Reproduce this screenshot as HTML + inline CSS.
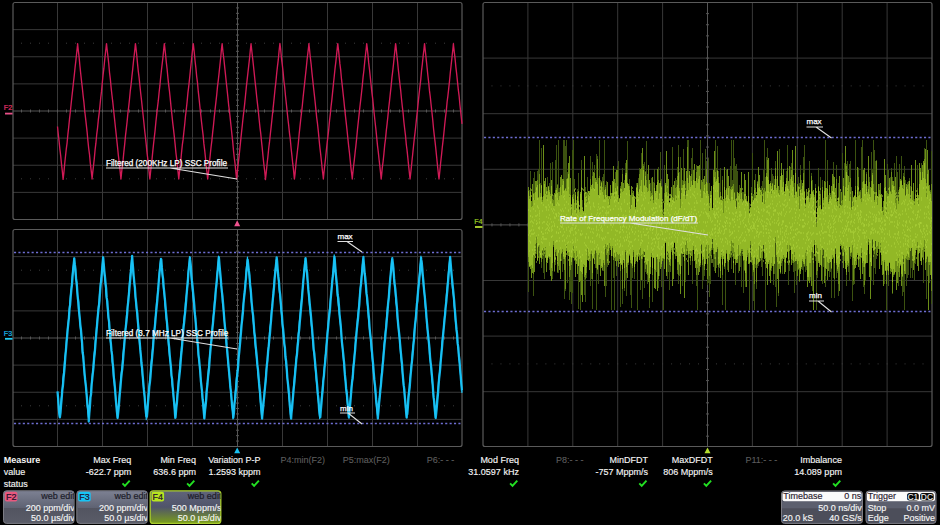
<!DOCTYPE html><html><head><meta charset="utf-8"><style>html,body{margin:0;padding:0;background:#000;overflow:hidden}svg{display:block}text{font-family:"Liberation Sans",sans-serif}</style></head><body>
<svg width="940" height="525" viewBox="0 0 940 525">
<rect width="940" height="525" fill="#000"/>
<path d="M57.50 2.5V219.5M102.50 2.5V219.5M147.50 2.5V219.5M192.50 2.5V219.5M282.50 2.5V219.5M327.50 2.5V219.5M372.50 2.5V219.5M417.50 2.5V219.5M13 29.62H462M13 56.75H462M13 83.88H462M13 138.12H462M13 165.25H462M13 192.38H462" stroke="#383838" stroke-width="1" fill="none"/>
<path d="M21.00 43.19h1M30.00 43.19h1M39.00 43.19h1M48.00 43.19h1M57.00 43.19h1M66.00 43.19h1M75.00 43.19h1M84.00 43.19h1M93.00 43.19h1M102.00 43.19h1M111.00 43.19h1M120.00 43.19h1M129.00 43.19h1M138.00 43.19h1M147.00 43.19h1M156.00 43.19h1M165.00 43.19h1M174.00 43.19h1M183.00 43.19h1M192.00 43.19h1M201.00 43.19h1M210.00 43.19h1M219.00 43.19h1M228.00 43.19h1M237.00 43.19h1M246.00 43.19h1M255.00 43.19h1M264.00 43.19h1M273.00 43.19h1M282.00 43.19h1M291.00 43.19h1M300.00 43.19h1M309.00 43.19h1M318.00 43.19h1M327.00 43.19h1M336.00 43.19h1M345.00 43.19h1M354.00 43.19h1M363.00 43.19h1M372.00 43.19h1M381.00 43.19h1M390.00 43.19h1M399.00 43.19h1M408.00 43.19h1M417.00 43.19h1M426.00 43.19h1M435.00 43.19h1M444.00 43.19h1M453.00 43.19h1M21.00 178.81h1M30.00 178.81h1M39.00 178.81h1M48.00 178.81h1M57.00 178.81h1M66.00 178.81h1M75.00 178.81h1M84.00 178.81h1M93.00 178.81h1M102.00 178.81h1M111.00 178.81h1M120.00 178.81h1M129.00 178.81h1M138.00 178.81h1M147.00 178.81h1M156.00 178.81h1M165.00 178.81h1M174.00 178.81h1M183.00 178.81h1M192.00 178.81h1M201.00 178.81h1M210.00 178.81h1M219.00 178.81h1M228.00 178.81h1M237.00 178.81h1M246.00 178.81h1M255.00 178.81h1M264.00 178.81h1M273.00 178.81h1M282.00 178.81h1M291.00 178.81h1M300.00 178.81h1M309.00 178.81h1M318.00 178.81h1M327.00 178.81h1M336.00 178.81h1M345.00 178.81h1M354.00 178.81h1M363.00 178.81h1M372.00 178.81h1M381.00 178.81h1M390.00 178.81h1M399.00 178.81h1M408.00 178.81h1M417.00 178.81h1M426.00 178.81h1M435.00 178.81h1M444.00 178.81h1M453.00 178.81h1" stroke="#3c3c3c" stroke-width="1" fill="none"/>
<path d="M237.50 2.5V219.5M13 111.00H462M21.50 109.50v3M30.50 109.50v3M39.50 109.50v3M48.50 109.50v3M57.50 109.50v3M66.50 109.50v3M75.50 109.50v3M84.50 109.50v3M93.50 109.50v3M102.50 109.50v3M111.50 109.50v3M120.50 109.50v3M129.50 109.50v3M138.50 109.50v3M147.50 109.50v3M156.50 109.50v3M165.50 109.50v3M174.50 109.50v3M183.50 109.50v3M192.50 109.50v3M201.50 109.50v3M210.50 109.50v3M219.50 109.50v3M228.50 109.50v3M237.50 109.50v3M246.50 109.50v3M255.50 109.50v3M264.50 109.50v3M273.50 109.50v3M282.50 109.50v3M291.50 109.50v3M300.50 109.50v3M309.50 109.50v3M318.50 109.50v3M327.50 109.50v3M336.50 109.50v3M345.50 109.50v3M354.50 109.50v3M363.50 109.50v3M372.50 109.50v3M381.50 109.50v3M390.50 109.50v3M399.50 109.50v3M408.50 109.50v3M417.50 109.50v3M426.50 109.50v3M435.50 109.50v3M444.50 109.50v3M453.50 109.50v3M236.00 7.92h3M236.00 13.35h3M236.00 18.77h3M236.00 24.20h3M236.00 29.62h3M236.00 35.05h3M236.00 40.48h3M236.00 45.90h3M236.00 51.33h3M236.00 56.75h3M236.00 62.17h3M236.00 67.60h3M236.00 73.03h3M236.00 78.45h3M236.00 83.88h3M236.00 89.30h3M236.00 94.72h3M236.00 100.15h3M236.00 105.58h3M236.00 111.00h3M236.00 116.42h3M236.00 121.85h3M236.00 127.28h3M236.00 132.70h3M236.00 138.12h3M236.00 143.55h3M236.00 148.97h3M236.00 154.40h3M236.00 159.82h3M236.00 165.25h3M236.00 170.68h3M236.00 176.10h3M236.00 181.53h3M236.00 186.95h3M236.00 192.38h3M236.00 197.80h3M236.00 203.22h3M236.00 208.65h3M236.00 214.07h3" stroke="#555" stroke-width="1" fill="none"/>
<rect x="13" y="2.5" width="449" height="217.0" rx="2" fill="none" stroke="#5a5a5a" stroke-width="1.2"/>
<path d="M57.50 229.5V446.5M102.50 229.5V446.5M147.50 229.5V446.5M192.50 229.5V446.5M282.50 229.5V446.5M327.50 229.5V446.5M372.50 229.5V446.5M417.50 229.5V446.5M13 256.62H462M13 283.75H462M13 310.88H462M13 365.12H462M13 392.25H462M13 419.38H462" stroke="#383838" stroke-width="1" fill="none"/>
<path d="M21.00 270.19h1M30.00 270.19h1M39.00 270.19h1M48.00 270.19h1M57.00 270.19h1M66.00 270.19h1M75.00 270.19h1M84.00 270.19h1M93.00 270.19h1M102.00 270.19h1M111.00 270.19h1M120.00 270.19h1M129.00 270.19h1M138.00 270.19h1M147.00 270.19h1M156.00 270.19h1M165.00 270.19h1M174.00 270.19h1M183.00 270.19h1M192.00 270.19h1M201.00 270.19h1M210.00 270.19h1M219.00 270.19h1M228.00 270.19h1M237.00 270.19h1M246.00 270.19h1M255.00 270.19h1M264.00 270.19h1M273.00 270.19h1M282.00 270.19h1M291.00 270.19h1M300.00 270.19h1M309.00 270.19h1M318.00 270.19h1M327.00 270.19h1M336.00 270.19h1M345.00 270.19h1M354.00 270.19h1M363.00 270.19h1M372.00 270.19h1M381.00 270.19h1M390.00 270.19h1M399.00 270.19h1M408.00 270.19h1M417.00 270.19h1M426.00 270.19h1M435.00 270.19h1M444.00 270.19h1M453.00 270.19h1M21.00 405.81h1M30.00 405.81h1M39.00 405.81h1M48.00 405.81h1M57.00 405.81h1M66.00 405.81h1M75.00 405.81h1M84.00 405.81h1M93.00 405.81h1M102.00 405.81h1M111.00 405.81h1M120.00 405.81h1M129.00 405.81h1M138.00 405.81h1M147.00 405.81h1M156.00 405.81h1M165.00 405.81h1M174.00 405.81h1M183.00 405.81h1M192.00 405.81h1M201.00 405.81h1M210.00 405.81h1M219.00 405.81h1M228.00 405.81h1M237.00 405.81h1M246.00 405.81h1M255.00 405.81h1M264.00 405.81h1M273.00 405.81h1M282.00 405.81h1M291.00 405.81h1M300.00 405.81h1M309.00 405.81h1M318.00 405.81h1M327.00 405.81h1M336.00 405.81h1M345.00 405.81h1M354.00 405.81h1M363.00 405.81h1M372.00 405.81h1M381.00 405.81h1M390.00 405.81h1M399.00 405.81h1M408.00 405.81h1M417.00 405.81h1M426.00 405.81h1M435.00 405.81h1M444.00 405.81h1M453.00 405.81h1" stroke="#3c3c3c" stroke-width="1" fill="none"/>
<path d="M237.50 229.5V446.5M13 338.00H462M21.50 336.50v3M30.50 336.50v3M39.50 336.50v3M48.50 336.50v3M57.50 336.50v3M66.50 336.50v3M75.50 336.50v3M84.50 336.50v3M93.50 336.50v3M102.50 336.50v3M111.50 336.50v3M120.50 336.50v3M129.50 336.50v3M138.50 336.50v3M147.50 336.50v3M156.50 336.50v3M165.50 336.50v3M174.50 336.50v3M183.50 336.50v3M192.50 336.50v3M201.50 336.50v3M210.50 336.50v3M219.50 336.50v3M228.50 336.50v3M237.50 336.50v3M246.50 336.50v3M255.50 336.50v3M264.50 336.50v3M273.50 336.50v3M282.50 336.50v3M291.50 336.50v3M300.50 336.50v3M309.50 336.50v3M318.50 336.50v3M327.50 336.50v3M336.50 336.50v3M345.50 336.50v3M354.50 336.50v3M363.50 336.50v3M372.50 336.50v3M381.50 336.50v3M390.50 336.50v3M399.50 336.50v3M408.50 336.50v3M417.50 336.50v3M426.50 336.50v3M435.50 336.50v3M444.50 336.50v3M453.50 336.50v3M236.00 234.93h3M236.00 240.35h3M236.00 245.78h3M236.00 251.20h3M236.00 256.62h3M236.00 262.05h3M236.00 267.48h3M236.00 272.90h3M236.00 278.32h3M236.00 283.75h3M236.00 289.18h3M236.00 294.60h3M236.00 300.02h3M236.00 305.45h3M236.00 310.88h3M236.00 316.30h3M236.00 321.73h3M236.00 327.15h3M236.00 332.57h3M236.00 338.00h3M236.00 343.43h3M236.00 348.85h3M236.00 354.27h3M236.00 359.70h3M236.00 365.12h3M236.00 370.55h3M236.00 375.98h3M236.00 381.40h3M236.00 386.82h3M236.00 392.25h3M236.00 397.68h3M236.00 403.10h3M236.00 408.52h3M236.00 413.95h3M236.00 419.38h3M236.00 424.80h3M236.00 430.23h3M236.00 435.65h3M236.00 441.07h3" stroke="#555" stroke-width="1" fill="none"/>
<rect x="13" y="229.5" width="449" height="217.0" rx="2" fill="none" stroke="#5a5a5a" stroke-width="1.2"/>
<path d="M527.90 2.5V446.5M572.80 2.5V446.5M617.70 2.5V446.5M662.60 2.5V446.5M752.40 2.5V446.5M797.30 2.5V446.5M842.20 2.5V446.5M887.10 2.5V446.5M483 58.10H932M483 113.70H932M483 169.30H932M483 280.50H932M483 336.10H932M483 391.70H932" stroke="#383838" stroke-width="1" fill="none"/>
<path d="M491.48 85.90h1M500.46 85.90h1M509.44 85.90h1M518.42 85.90h1M527.40 85.90h1M536.38 85.90h1M545.36 85.90h1M554.34 85.90h1M563.32 85.90h1M572.30 85.90h1M581.28 85.90h1M590.26 85.90h1M599.24 85.90h1M608.22 85.90h1M617.20 85.90h1M626.18 85.90h1M635.16 85.90h1M644.14 85.90h1M653.12 85.90h1M662.10 85.90h1M671.08 85.90h1M680.06 85.90h1M689.04 85.90h1M698.02 85.90h1M707.00 85.90h1M715.98 85.90h1M724.96 85.90h1M733.94 85.90h1M742.92 85.90h1M751.90 85.90h1M760.88 85.90h1M769.86 85.90h1M778.84 85.90h1M787.82 85.90h1M796.80 85.90h1M805.78 85.90h1M814.76 85.90h1M823.74 85.90h1M832.72 85.90h1M841.70 85.90h1M850.68 85.90h1M859.66 85.90h1M868.64 85.90h1M877.62 85.90h1M886.60 85.90h1M895.58 85.90h1M904.56 85.90h1M913.54 85.90h1M922.52 85.90h1M491.48 363.90h1M500.46 363.90h1M509.44 363.90h1M518.42 363.90h1M527.40 363.90h1M536.38 363.90h1M545.36 363.90h1M554.34 363.90h1M563.32 363.90h1M572.30 363.90h1M581.28 363.90h1M590.26 363.90h1M599.24 363.90h1M608.22 363.90h1M617.20 363.90h1M626.18 363.90h1M635.16 363.90h1M644.14 363.90h1M653.12 363.90h1M662.10 363.90h1M671.08 363.90h1M680.06 363.90h1M689.04 363.90h1M698.02 363.90h1M707.00 363.90h1M715.98 363.90h1M724.96 363.90h1M733.94 363.90h1M742.92 363.90h1M751.90 363.90h1M760.88 363.90h1M769.86 363.90h1M778.84 363.90h1M787.82 363.90h1M796.80 363.90h1M805.78 363.90h1M814.76 363.90h1M823.74 363.90h1M832.72 363.90h1M841.70 363.90h1M850.68 363.90h1M859.66 363.90h1M868.64 363.90h1M877.62 363.90h1M886.60 363.90h1M895.58 363.90h1M904.56 363.90h1M913.54 363.90h1M922.52 363.90h1" stroke="#3c3c3c" stroke-width="1" fill="none"/>
<path d="M707.50 2.5V446.5M483 224.90H932M491.98 223.40v3M500.96 223.40v3M509.94 223.40v3M518.92 223.40v3M527.90 223.40v3M536.88 223.40v3M545.86 223.40v3M554.84 223.40v3M563.82 223.40v3M572.80 223.40v3M581.78 223.40v3M590.76 223.40v3M599.74 223.40v3M608.72 223.40v3M617.70 223.40v3M626.68 223.40v3M635.66 223.40v3M644.64 223.40v3M653.62 223.40v3M662.60 223.40v3M671.58 223.40v3M680.56 223.40v3M689.54 223.40v3M698.52 223.40v3M707.50 223.40v3M716.48 223.40v3M725.46 223.40v3M734.44 223.40v3M743.42 223.40v3M752.40 223.40v3M761.38 223.40v3M770.36 223.40v3M779.34 223.40v3M788.32 223.40v3M797.30 223.40v3M806.28 223.40v3M815.26 223.40v3M824.24 223.40v3M833.22 223.40v3M842.20 223.40v3M851.18 223.40v3M860.16 223.40v3M869.14 223.40v3M878.12 223.40v3M887.10 223.40v3M896.08 223.40v3M905.06 223.40v3M914.04 223.40v3M923.02 223.40v3M706.00 13.62h3M706.00 24.74h3M706.00 35.86h3M706.00 46.98h3M706.00 58.10h3M706.00 69.22h3M706.00 80.34h3M706.00 91.46h3M706.00 102.58h3M706.00 113.70h3M706.00 124.82h3M706.00 135.94h3M706.00 147.06h3M706.00 158.18h3M706.00 169.30h3M706.00 180.42h3M706.00 191.54h3M706.00 202.66h3M706.00 213.78h3M706.00 224.90h3M706.00 236.02h3M706.00 247.14h3M706.00 258.26h3M706.00 269.38h3M706.00 280.50h3M706.00 291.62h3M706.00 302.74h3M706.00 313.86h3M706.00 324.98h3M706.00 336.10h3M706.00 347.22h3M706.00 358.34h3M706.00 369.46h3M706.00 380.58h3M706.00 391.70h3M706.00 402.82h3M706.00 413.94h3M706.00 425.06h3M706.00 436.18h3" stroke="#555" stroke-width="1" fill="none"/>
<rect x="483" y="2.5" width="449" height="444.0" rx="2" fill="none" stroke="#5a5a5a" stroke-width="1.2"/>
<path d="M14 252.5H462" stroke="#6e6ed2" stroke-width="1.3" stroke-dasharray="2.1 2.3" fill="none"/>
<path d="M14 423.5H462" stroke="#6e6ed2" stroke-width="1.3" stroke-dasharray="2.1 2.3" fill="none"/>
<path d="M484 137.5H932" stroke="#6e6ed2" stroke-width="1.3" stroke-dasharray="2.1 2.3" fill="none"/>
<path d="M484 311.5H932" stroke="#6e6ed2" stroke-width="1.3" stroke-dasharray="2.1 2.3" fill="none"/>
<path d="M57.50 126.5 58.30 134.3 59.10 141.5 59.90 149.4 60.70 155.9 61.50 164.1 62.30 171.0 63.10 179.4 63.14 179.0 63.90 172.6 64.70 163.7 65.50 156.3 66.30 148.9 67.10 142.8 67.90 134.3 68.70 127.2 69.50 119.1 70.30 112.0 71.10 104.3 71.90 96.7 72.70 89.7 73.50 82.2 74.30 75.2 75.10 67.3 75.90 60.3 76.70 52.7 77.50 45.4 77.60 43.6 78.30 50.5 79.10 57.0 79.90 65.8 80.70 73.5 81.50 80.9 82.30 87.7 83.10 95.5 83.90 102.1 84.70 110.7 85.50 117.7 86.30 124.7 87.10 131.8 87.90 140.7 88.70 148.5 89.50 154.3 90.30 163.1 91.10 169.9 91.90 176.9 92.05 179.0 92.70 172.6 93.50 165.9 94.30 158.6 95.10 149.7 95.90 143.2 96.70 134.7 97.50 128.4 98.30 120.2 99.10 113.7 99.90 106.4 100.70 98.0 101.50 91.4 102.30 82.7 103.10 74.8 103.90 68.2 104.70 59.7 105.50 52.5 106.30 45.4 106.51 43.6 107.10 49.3 107.90 56.0 108.70 63.3 109.50 72.3 110.30 78.8 111.10 87.4 111.90 94.8 112.70 101.4 113.50 109.0 114.30 116.6 115.10 124.3 115.90 131.7 116.70 139.2 117.50 146.8 118.30 154.8 119.10 161.5 119.90 168.9 120.70 176.9 120.97 179.0 121.50 173.5 122.30 166.1 123.10 159.9 123.90 151.5 124.70 144.1 125.50 135.6 126.30 128.9 127.10 121.7 127.90 113.2 128.70 106.8 129.50 99.3 130.30 90.8 131.10 84.3 131.90 76.5 132.70 69.4 133.50 61.3 134.30 54.5 135.10 47.0 135.42 43.6 135.90 47.2 136.70 54.8 137.50 63.4 138.30 71.4 139.10 77.6 139.90 85.5 140.70 93.2 141.50 100.2 142.30 107.8 143.10 115.2 143.90 122.8 144.70 130.7 145.50 137.7 146.30 145.3 147.10 153.5 147.90 159.6 148.70 168.1 149.50 175.9 149.88 179.0 150.30 174.7 151.10 167.0 151.90 160.6 152.70 152.1 153.50 144.5 154.30 137.4 155.10 130.4 155.90 121.8 156.70 114.7 157.50 107.3 158.30 100.7 159.10 92.5 159.90 85.7 160.70 77.0 161.50 69.8 162.30 62.9 163.10 55.8 163.90 47.5 164.33 43.6 164.70 46.6 165.50 53.9 166.30 62.1 167.10 69.0 167.90 77.6 168.70 85.1 169.50 91.5 170.30 99.1 171.10 107.6 171.90 114.8 172.70 122.6 173.50 129.2 174.30 136.3 175.10 144.1 175.90 152.5 176.70 159.1 177.50 166.7 178.30 174.3 178.78 179.0 179.10 175.9 179.90 168.4 180.70 161.8 181.50 152.9 182.30 145.2 183.10 139.4 183.90 131.8 184.70 124.5 185.50 116.0 186.30 109.4 187.10 101.9 187.90 93.1 188.70 86.6 189.50 79.2 190.30 71.4 191.10 63.7 191.90 55.8 192.70 48.4 193.24 43.6 193.50 45.5 194.30 52.8 195.10 61.2 195.90 68.1 196.70 76.6 197.50 82.7 198.30 91.7 199.10 98.8 199.90 106.7 200.70 114.2 201.50 121.7 202.30 128.6 203.10 135.1 203.90 143.9 204.70 150.4 205.50 158.1 206.30 166.2 207.10 173.5 207.69 179.0 207.90 176.9 208.70 170.4 209.50 162.3 210.30 154.3 211.10 146.7 211.90 140.3 212.70 132.1 213.50 125.1 214.30 116.9 215.10 109.1 215.90 102.2 216.70 95.2 217.50 86.6 218.30 80.2 219.10 72.9 219.90 65.2 220.70 57.8 221.50 48.8 222.15 43.6 222.30 45.2 223.10 53.2 223.90 59.2 224.70 67.1 225.50 74.6 226.30 82.5 227.10 89.8 227.90 97.4 228.70 105.5 229.50 111.6 230.30 119.1 231.10 126.8 231.90 134.3 232.70 141.6 233.50 150.8 234.30 158.0 235.10 164.2 235.90 172.4 236.60 179.0 236.70 177.8 237.50 170.3 238.30 162.9 239.10 155.9 239.90 148.3 240.70 140.4 241.50 132.6 242.30 125.3 243.10 117.5 243.90 110.8 244.70 103.6 245.50 95.5 246.30 87.4 247.10 80.1 247.90 73.0 248.70 65.9 249.50 58.7 250.30 50.5 251.06 43.6 251.10 44.5 251.90 51.7 252.70 58.8 253.50 66.2 254.30 73.9 255.10 81.8 255.90 88.8 256.70 96.8 257.50 103.9 258.30 111.0 259.10 119.0 259.90 126.8 260.70 133.1 261.50 141.3 262.30 148.8 263.10 157.1 263.90 164.7 264.70 171.1 265.50 179.6 265.51 179.0 266.30 172.2 267.10 163.7 267.90 156.6 268.70 148.5 269.50 142.2 270.30 134.5 271.10 127.4 271.90 119.7 272.70 112.0 273.50 104.6 274.30 96.8 275.10 88.5 275.90 81.9 276.70 73.3 277.50 66.1 278.30 59.7 279.10 50.9 279.90 43.5 279.97 43.6 280.70 49.7 281.50 58.6 282.30 64.8 283.10 72.1 283.90 81.0 284.70 87.2 285.50 96.0 286.30 103.2 287.10 111.0 287.90 118.7 288.70 125.5 289.50 133.4 290.30 139.5 291.10 148.3 291.90 155.4 292.70 163.2 293.50 169.6 294.30 178.3 294.42 179.0 295.10 173.5 295.90 164.4 296.70 157.4 297.50 150.3 298.30 143.3 299.10 134.7 299.90 127.1 300.70 119.8 301.50 112.9 302.30 105.7 303.10 97.5 303.90 90.0 304.70 82.6 305.50 75.0 306.30 67.6 307.10 59.5 307.90 52.8 308.70 46.1 308.88 43.6 309.50 49.3 310.30 57.3 311.10 63.8 311.90 72.2 312.70 79.8 313.50 87.2 314.30 94.4 315.10 101.8 315.90 109.6 316.70 117.6 317.50 123.7 318.30 131.1 319.10 139.8 319.90 147.6 320.70 154.3 321.50 161.7 322.30 169.7 323.10 176.2 323.34 179.0 323.90 173.3 324.70 165.7 325.50 158.9 326.30 150.9 327.10 143.3 327.90 136.6 328.70 129.6 329.50 120.9 330.30 114.1 331.10 106.1 331.90 99.4 332.70 91.4 333.50 83.4 334.30 75.8 335.10 67.9 335.90 61.3 336.70 53.6 337.50 45.7 337.79 43.6 338.30 48.1 339.10 55.6 339.90 63.9 340.70 70.2 341.50 79.2 342.30 85.8 343.10 93.5 343.90 100.8 344.70 108.9 345.50 116.4 346.30 123.4 347.10 130.8 347.90 138.7 348.70 146.4 349.50 153.1 350.30 161.2 351.10 169.1 351.90 175.7 352.25 179.0 352.70 174.3 353.50 166.8 354.30 160.1 355.10 152.6 355.90 145.6 356.70 137.9 357.50 129.3 358.30 121.7 359.10 114.4 359.90 106.7 360.70 100.2 361.50 93.0 362.30 85.5 363.10 76.9 363.90 70.5 364.70 62.0 365.50 54.7 366.30 47.8 366.70 43.6 367.10 46.6 367.90 54.1 368.70 62.9 369.50 69.5 370.30 77.1 371.10 85.0 371.90 92.6 372.70 98.9 373.50 107.0 374.30 114.7 375.10 122.3 375.90 129.3 376.70 137.4 377.50 145.6 378.30 152.1 379.10 159.8 379.90 166.6 380.70 174.3 381.15 179.0 381.50 176.1 382.30 167.6 383.10 161.5 383.90 154.0 384.70 145.1 385.50 139.1 386.30 130.6 387.10 123.8 387.90 116.3 388.70 108.0 389.50 101.1 390.30 93.6 391.10 86.4 391.90 77.9 392.70 71.3 393.50 64.2 394.30 56.2 395.10 48.4 395.61 43.6 395.90 45.6 396.70 53.8 397.50 61.0 398.30 69.2 399.10 76.6 399.90 83.9 400.70 90.7 401.50 99.0 402.30 106.5 403.10 113.2 403.90 122.0 404.70 129.0 405.50 135.6 406.30 144.5 407.10 150.6 407.90 158.4 408.70 166.6 409.50 173.9 410.06 179.0 410.30 176.9 411.10 169.6 411.90 161.7 412.70 154.0 413.50 146.2 414.30 138.6 415.10 132.2 415.90 124.8 416.70 116.9 417.50 109.8 418.30 101.6 419.10 93.9 419.90 86.7 420.70 80.1 421.50 71.1 422.30 64.4 423.10 56.4 423.90 49.9 424.52 43.6 424.70 45.0 425.50 52.5 426.30 60.1 427.10 67.8 427.90 75.7 428.70 82.5 429.50 90.9 430.30 97.0 431.10 104.8 431.90 112.0 432.70 119.5 433.50 128.2 434.30 135.6 435.10 142.1 435.90 149.6 436.70 157.5 437.50 165.6 438.30 173.2 438.98 179.0 439.10 178.3 439.90 170.5 440.70 162.2 441.50 155.2 442.30 147.3 443.10 140.4 443.90 133.0 444.70 124.8 445.50 117.4 446.30 110.9 447.10 102.0 447.90 95.9 448.70 88.6 449.50 81.2 450.30 72.7 451.10 65.5 451.90 58.1 452.70 50.7 453.43 43.6 453.50 45.1 454.30 52.1 455.10 58.9 455.90 67.4 456.70 74.2 457.50 81.9 458.30 89.6 459.10 95.8 459.90 104.7 460.70 112.0 461.50 119.2 462.00 123.9" stroke="#d01a56" stroke-width="1.35" fill="none" stroke-linejoin="round"/>
<path d="M57.50 391.3 58.10 398.0 58.70 407.5 59.30 413.8 59.84 417.4 59.90 417.1 60.50 412.9 61.10 404.7 61.70 398.5 62.30 390.1 62.90 386.1 63.50 378.5 64.10 372.8 64.70 365.8 65.30 357.0 65.90 350.6 66.50 343.2 67.10 336.4 67.70 329.4 68.30 323.6 68.90 318.0 69.50 309.2 70.10 304.9 70.70 297.0 71.30 290.2 71.90 285.4 72.50 277.5 73.10 270.2 73.70 264.1 74.30 258.5 74.90 264.9 75.50 269.3 76.10 279.3 76.70 282.5 77.30 291.8 77.90 298.8 78.50 302.5 79.10 312.0 79.70 317.2 80.30 324.6 80.90 329.2 81.50 336.1 82.10 343.2 82.70 352.7 83.30 356.6 83.90 365.3 84.50 372.7 85.10 379.4 85.70 383.9 86.30 390.6 86.90 397.9 87.50 405.5 88.10 409.8 88.70 418.8 88.75 421.5 89.30 413.5 89.90 407.0 90.50 397.4 91.10 394.0 91.70 384.2 92.30 378.4 92.90 372.7 93.50 367.2 94.10 358.4 94.70 353.8 95.30 345.8 95.90 338.2 96.50 331.6 97.10 324.4 97.70 317.4 98.30 310.9 98.90 306.2 99.50 300.6 100.10 290.9 100.70 283.8 101.30 280.5 101.90 272.2 102.50 265.1 103.10 257.8 103.21 257.7 103.70 263.3 104.30 270.8 104.90 276.2 105.50 282.7 106.10 288.1 106.70 297.9 107.30 301.4 107.90 309.7 108.50 317.6 109.10 321.8 109.70 330.6 110.30 338.1 110.90 343.6 111.50 350.9 112.10 355.1 112.70 363.0 113.30 368.6 113.90 377.8 114.50 382.5 115.10 389.8 115.70 398.4 116.30 404.6 116.90 411.7 117.50 416.5 117.66 418.0 118.10 413.6 118.70 407.8 119.30 400.2 119.90 392.9 120.50 386.6 121.10 379.0 121.70 373.1 122.30 368.6 122.90 361.8 123.50 354.0 124.10 346.8 124.70 339.6 125.30 332.0 125.90 326.0 126.50 321.1 127.10 314.7 127.70 306.2 128.30 301.1 128.90 294.4 129.50 287.4 130.10 280.6 130.70 274.3 131.30 266.1 131.90 260.7 132.12 255.8 132.50 260.9 133.10 268.4 133.70 276.1 134.30 282.5 134.90 287.7 135.50 296.8 136.10 302.4 136.70 308.8 137.30 313.4 137.90 322.0 138.50 327.7 139.10 335.9 139.70 341.8 140.30 349.7 140.90 355.8 141.50 363.0 142.10 368.1 142.70 375.9 143.30 382.9 143.90 389.9 144.50 394.8 145.10 403.3 145.70 410.1 146.30 416.1 146.57 415.2 146.90 416.6 147.50 409.8 148.10 401.6 148.70 394.9 149.30 386.9 149.90 382.7 150.50 376.4 151.10 368.0 151.70 362.1 152.30 355.5 152.90 348.9 153.50 340.2 154.10 335.7 154.70 328.3 155.30 321.9 155.90 314.4 156.50 308.4 157.10 302.3 157.70 295.1 158.30 288.7 158.90 279.5 159.50 273.3 160.10 267.6 160.70 261.7 161.03 259.0 161.30 259.5 161.90 267.9 162.50 274.3 163.10 278.9 163.70 287.1 164.30 292.9 164.90 299.0 165.50 306.0 166.10 313.3 166.70 319.5 167.30 326.2 167.90 332.3 168.50 340.6 169.10 347.0 169.70 354.5 170.30 361.1 170.90 366.5 171.50 375.6 172.10 379.0 172.70 387.1 173.30 393.4 173.90 400.5 174.50 406.1 175.10 415.4 175.49 417.7 175.70 415.7 176.30 407.8 176.90 403.1 177.50 394.6 178.10 389.5 178.70 382.1 179.30 376.3 179.90 371.0 180.50 363.8 181.10 355.7 181.70 350.4 182.30 343.1 182.90 335.4 183.50 327.9 184.10 322.9 184.70 316.1 185.30 310.8 185.90 304.2 186.50 296.2 187.10 288.6 187.70 283.9 188.30 274.0 188.90 267.7 189.50 262.6 189.94 257.7 190.10 259.7 190.70 264.7 191.30 273.1 191.90 280.7 192.50 285.6 193.10 292.5 193.70 298.4 194.30 305.3 194.90 314.4 195.50 319.0 196.10 327.8 196.70 334.3 197.30 339.8 197.90 345.3 198.50 354.6 199.10 359.5 199.70 365.9 200.30 372.2 200.90 381.3 201.50 386.2 202.10 392.2 202.70 399.5 203.30 404.9 203.90 413.4 204.39 418.5 204.50 417.1 205.10 409.9 205.70 405.0 206.30 398.5 206.90 388.8 207.50 384.0 208.10 376.4 208.70 372.1 209.30 364.9 209.90 356.3 210.50 349.7 211.10 342.6 211.70 338.9 212.30 329.7 212.90 324.2 213.50 317.0 214.10 310.9 214.70 304.1 215.30 297.9 215.90 289.0 216.50 284.6 217.10 276.3 217.70 270.4 218.30 263.0 218.85 257.6 218.90 257.3 219.50 264.8 220.10 271.3 220.70 277.6 221.30 285.7 221.90 291.8 222.50 296.5 223.10 303.9 223.70 311.4 224.30 319.7 224.90 326.3 225.50 331.7 226.10 336.5 226.70 345.9 227.30 351.4 227.90 358.6 228.50 365.7 229.10 372.1 229.70 378.3 230.30 386.5 230.90 391.3 231.50 398.0 232.10 406.3 232.70 410.7 233.30 417.7 233.31 417.7 233.90 413.1 234.50 403.6 235.10 399.7 235.70 392.5 236.30 384.9 236.90 377.7 237.50 372.8 238.10 366.6 238.70 357.1 239.30 351.6 239.90 345.2 240.50 338.4 241.10 331.1 241.70 323.7 242.30 318.6 242.90 312.8 243.50 303.4 244.10 297.3 244.70 292.7 245.30 285.9 245.90 278.8 246.50 269.8 247.10 265.7 247.70 259.9 247.76 260.3 248.30 265.3 248.90 270.9 249.50 275.3 250.10 284.8 250.70 289.2 251.30 297.5 251.90 305.2 252.50 311.1 253.10 315.7 253.70 322.9 254.30 331.8 254.90 335.8 255.50 344.1 256.10 350.1 256.70 355.9 257.30 364.2 257.90 368.8 258.50 375.7 259.10 383.4 259.70 388.9 260.30 395.6 260.90 404.1 261.50 411.4 262.10 418.6 262.21 416.8 262.70 411.8 263.30 406.2 263.90 399.1 264.50 393.4 265.10 386.3 265.70 381.3 266.30 372.5 266.90 364.7 267.50 360.3 268.10 351.7 268.70 346.7 269.30 339.6 269.90 334.4 270.50 326.4 271.10 320.0 271.70 312.0 272.30 306.4 272.90 298.6 273.50 293.7 274.10 286.2 274.70 278.1 275.30 271.8 275.90 265.6 276.50 260.2 276.67 257.3 277.10 261.1 277.70 269.7 278.30 276.2 278.90 280.8 279.50 289.6 280.10 294.2 280.70 301.0 281.30 309.4 281.90 314.8 282.50 323.8 283.10 329.0 283.70 335.2 284.30 343.6 284.90 347.5 285.50 356.7 286.10 360.9 286.70 368.0 287.30 377.5 287.90 383.2 288.50 388.3 289.10 394.6 289.70 404.3 290.30 409.9 290.90 417.1 291.12 418.7 291.50 413.0 292.10 408.1 292.70 400.4 293.30 393.3 293.90 387.0 294.50 381.3 295.10 373.7 295.70 367.1 296.30 359.6 296.90 355.4 297.50 348.0 298.10 341.9 298.70 333.9 299.30 328.7 299.90 320.8 300.50 314.4 301.10 307.7 301.70 301.6 302.30 293.7 302.90 285.9 303.50 279.0 304.10 272.9 304.70 265.6 305.30 262.0 305.58 258.1 305.90 261.0 306.50 268.7 307.10 272.6 307.70 281.0 308.30 289.2 308.90 294.9 309.50 300.9 310.10 307.7 310.70 313.1 311.30 320.0 311.90 326.7 312.50 334.1 313.10 340.8 313.70 349.3 314.30 353.4 314.90 360.4 315.50 367.2 316.10 373.5 316.70 380.6 317.30 387.1 317.90 394.7 318.50 399.7 319.10 409.6 319.70 414.3 320.04 416.7 320.30 417.1 320.90 409.5 321.50 402.8 322.10 395.4 322.70 390.4 323.30 380.8 323.90 376.1 324.50 368.0 325.10 362.7 325.70 356.2 326.30 347.5 326.90 341.0 327.50 333.6 328.10 327.7 328.70 320.5 329.30 315.0 329.90 310.3 330.50 301.5 331.10 294.6 331.70 288.5 332.30 281.1 332.90 276.0 333.50 269.3 334.10 260.6 334.49 256.9 334.70 258.9 335.30 267.1 335.90 274.8 336.50 280.4 337.10 286.3 337.70 295.0 338.30 298.2 338.90 305.0 339.50 314.3 340.10 319.7 340.70 325.0 341.30 333.5 341.90 341.8 342.50 346.8 343.10 352.9 343.70 358.6 344.30 365.2 344.90 374.9 345.50 380.1 346.10 388.4 346.70 391.9 347.30 399.3 347.90 405.2 348.50 413.2 348.94 417.6 349.10 415.2 349.70 409.2 350.30 403.1 350.90 396.0 351.50 388.4 352.10 381.7 352.70 378.4 353.30 368.8 353.90 363.3 354.50 356.3 355.10 350.1 355.70 341.8 356.30 335.9 356.90 328.5 357.50 323.4 358.10 318.0 358.70 310.2 359.30 304.5 359.90 295.5 360.50 288.1 361.10 283.3 361.70 276.4 362.30 270.0 362.90 262.6 363.40 257.0 363.50 259.1 364.10 266.1 364.70 273.5 365.30 278.0 365.90 285.2 366.50 293.2 367.10 297.7 367.70 304.0 368.30 311.4 368.90 317.3 369.50 326.4 370.10 333.3 370.70 338.1 371.30 344.2 371.90 350.7 372.50 357.9 373.10 364.0 373.70 372.0 374.30 379.2 374.90 384.7 375.50 390.7 376.10 399.7 376.70 404.0 377.30 411.2 377.86 418.5 377.90 417.2 378.50 410.9 379.10 403.2 379.70 397.7 380.30 390.6 380.90 385.5 381.50 378.1 382.10 372.6 382.70 365.1 383.30 358.8 383.90 351.4 384.50 344.3 385.10 338.9 385.70 331.7 386.30 326.1 386.90 318.6 387.50 311.8 388.10 303.6 388.70 298.8 389.30 290.6 389.90 283.0 390.50 276.1 391.10 269.8 391.70 263.4 392.30 258.2 392.31 258.4 392.90 263.3 393.50 269.2 394.10 278.4 394.70 284.3 395.30 289.1 395.90 295.9 396.50 302.8 397.10 310.3 397.70 318.8 398.30 325.8 398.90 331.3 399.50 336.6 400.10 344.0 400.70 350.5 401.30 357.0 401.90 362.6 402.50 371.3 403.10 378.9 403.70 385.2 404.30 389.6 404.90 397.8 405.50 403.2 406.10 411.8 406.70 417.6 406.76 415.3 407.30 414.1 407.90 406.9 408.50 397.8 409.10 391.8 409.70 387.3 410.30 379.0 410.90 372.2 411.50 365.6 412.10 360.0 412.70 354.0 413.30 345.8 413.90 340.7 414.50 332.7 415.10 324.2 415.70 320.1 416.30 312.0 416.90 304.0 417.50 300.7 418.10 290.6 418.70 285.8 419.30 278.8 419.90 273.6 420.50 265.1 421.10 257.8 421.22 259.4 421.70 262.0 422.30 268.5 422.90 276.4 423.50 282.4 424.10 290.5 424.70 295.3 425.30 302.4 425.90 308.7 426.50 318.0 427.10 324.2 427.70 330.9 428.30 336.8 428.90 342.7 429.50 348.4 430.10 357.6 430.70 363.1 431.30 368.1 431.90 375.3 432.50 381.7 433.10 390.6 433.70 397.9 434.30 402.1 434.90 410.9 435.50 415.9 435.68 418.0 436.10 414.4 436.70 408.4 437.30 400.8 437.90 394.8 438.50 386.6 439.10 378.6 439.70 373.7 440.30 367.3 440.90 359.2 441.50 353.2 442.10 346.3 442.70 338.6 443.30 332.9 443.90 326.5 444.50 320.1 445.10 314.3 445.70 306.5 446.30 301.9 446.90 294.6 447.50 288.3 448.10 280.8 448.70 274.0 449.30 266.9 449.90 261.1 450.13 257.0 450.50 261.1 451.10 268.6 451.70 275.6 452.30 281.7 452.90 287.6 453.50 293.5 454.10 300.2 454.70 307.9 455.30 315.4 455.90 322.7 456.50 329.2 457.10 334.4 457.70 343.4 458.30 347.7 458.90 356.0 459.50 360.3 460.10 369.5 460.70 375.8 461.30 383.6 461.90 390.0 462.00 390.4" stroke="#14b6ea" stroke-width="2.3" fill="none" stroke-linejoin="round"/>
<path d="M57.50 394.6 58.10 399.9 58.70 407.2 59.30 413.6 59.55 417.0 59.90 412.7 60.50 408.2 61.10 399.1 61.70 395.3 62.30 388.6 62.90 378.7 63.50 373.4 64.10 367.2 64.70 358.7 65.30 353.7 65.90 349.0 66.50 339.2 67.10 334.5 67.70 326.0 68.30 321.2 68.90 315.9 69.50 306.5 70.10 299.1 70.70 292.7 71.30 288.0 71.90 279.2 72.50 272.9 73.10 267.9 73.70 263.0 74.00 258.1 74.30 261.0 74.90 267.5 75.50 275.1 76.10 279.5 76.70 288.1 77.30 293.1 77.90 301.5 78.50 309.5 79.10 312.5 79.70 321.1 80.30 327.9 80.90 332.7 81.50 339.8 82.10 349.4 82.70 356.0 83.30 359.1 83.90 368.1 84.50 375.7 85.10 379.4 85.70 387.5 86.30 391.9 86.90 399.8 87.50 407.7 88.10 413.9 88.45 417.3 88.70 415.9 89.30 406.5 89.90 400.9 90.50 396.4 91.10 388.7 91.70 381.5 92.30 374.7 92.90 370.4 93.50 362.1 94.10 353.3 94.70 349.8 95.30 341.3 95.90 335.1 96.50 327.6 97.10 321.9 97.70 314.8 98.30 307.2 98.90 302.8 99.50 294.0 100.10 290.1 100.70 280.5 101.30 276.9 101.90 270.4 102.50 262.5 102.91 256.3 103.10 260.9 103.70 265.7 104.30 274.3 104.90 279.7 105.50 285.5 106.10 295.1 106.70 299.4 107.30 305.9 107.90 314.5 108.50 319.2 109.10 327.0 109.70 331.6 110.30 340.9 110.90 345.2 111.50 351.0 112.10 361.3 112.70 364.7 113.30 374.4 113.90 381.2 114.50 386.3 115.10 390.6 115.70 397.4 116.30 404.6 116.90 411.9 117.37 418.1 117.50 416.5 118.10 411.3 118.70 402.2 119.30 394.7 119.90 389.8 120.50 381.5 121.10 374.6 121.70 369.9 122.30 363.8 122.90 354.7 123.50 349.6 124.10 344.0 124.70 337.6 125.30 329.5 125.90 324.9 126.50 315.4 127.10 310.9 127.70 304.5 128.30 298.4 128.90 290.2 129.50 282.0 130.10 275.2 130.70 270.5 131.30 262.4 131.82 256.7 131.90 259.4 132.50 263.8 133.10 273.2 133.70 277.6 134.30 283.4 134.90 290.7 135.50 298.4 136.10 305.5 136.70 311.4 137.30 317.2 137.90 325.0 138.50 333.5 139.10 338.5 139.70 346.7 140.30 349.7 140.90 360.2 141.50 366.4 142.10 371.6 142.70 378.1 143.30 384.8 143.90 392.9 144.50 396.2 145.10 405.1 145.70 411.3 146.28 419.6 146.30 416.4 146.90 411.5 147.50 404.9 148.10 395.8 148.70 391.5 149.30 383.9 149.90 377.5 150.50 371.4 151.10 362.5 151.70 358.1 152.30 350.5 152.90 345.9 153.50 336.7 154.10 332.4 154.70 325.5 155.30 318.4 155.90 312.8 156.50 302.8 157.10 298.4 157.70 291.9 158.30 285.5 158.90 277.8 159.50 269.8 160.10 263.7 160.70 258.8 160.73 258.5 161.30 263.0 161.90 269.2 162.50 276.9 163.10 284.0 163.70 290.9 164.30 295.5 164.90 305.1 165.50 310.0 166.10 318.4 166.70 321.9 167.30 332.3 167.90 337.5 168.50 345.6 169.10 352.3 169.70 358.3 170.30 362.0 170.90 369.6 171.50 375.8 172.10 384.6 172.70 388.8 173.30 395.6 173.90 401.8 174.50 408.4 175.10 418.3 175.19 416.8 175.70 413.7 176.30 404.7 176.90 399.5 177.50 391.8 178.10 385.4 178.70 378.2 179.30 372.6 179.90 364.4 180.50 357.9 181.10 352.3 181.70 344.4 182.30 338.7 182.90 334.1 183.50 323.8 184.10 317.5 184.70 313.7 185.30 304.1 185.90 298.3 186.50 294.1 187.10 286.4 187.70 278.3 188.30 271.0 188.90 265.3 189.50 258.7 189.64 256.5 190.10 264.3 190.70 271.6 191.30 277.5 191.90 284.5 192.50 291.3 193.10 297.7 193.70 304.5 194.30 311.3 194.90 314.4 195.50 321.9 196.10 328.3 196.70 336.3 197.30 342.5 197.90 348.5 198.50 357.1 199.10 362.0 199.70 367.8 200.30 374.7 200.90 382.1 201.50 389.3 202.10 395.8 202.70 401.9 203.30 407.5 203.90 415.0 204.09 418.1 204.50 412.3 205.10 405.1 205.70 400.0 206.30 391.9 206.90 387.4 207.50 380.6 208.10 371.9 208.70 367.2 209.30 359.4 209.90 353.2 210.50 347.3 211.10 341.3 211.70 335.1 212.30 327.9 212.90 319.2 213.50 313.9 214.10 306.4 214.70 298.6 215.30 294.1 215.90 287.1 216.50 282.1 217.10 273.3 217.70 268.7 218.30 260.8 218.55 256.0 218.90 260.3 219.50 269.4 220.10 274.2 220.70 281.9 221.30 286.6 221.90 293.0 222.50 303.3 223.10 306.4 223.70 313.4 224.30 320.1 224.90 326.5 225.50 336.0 226.10 343.3 226.70 348.5 227.30 354.1 227.90 362.7 228.50 367.8 229.10 373.0 229.70 381.8 230.30 387.1 230.90 393.4 231.50 400.2 232.10 407.1 232.70 412.9 233.00 419.0 233.30 414.7 233.90 409.1 234.50 401.3 235.10 392.4 235.70 388.5 236.30 379.2 236.90 374.4 237.50 369.4 238.10 362.0 238.70 356.3 239.30 349.1 239.90 340.5 240.50 333.4 241.10 328.0 241.70 322.3 242.30 313.9 242.90 307.6 243.50 302.7 244.10 294.5 244.70 288.9 245.30 282.0 245.90 276.9 246.50 266.7 247.10 260.7 247.46 257.0 247.70 261.8 248.30 267.9 248.90 272.3 249.50 279.0 250.10 286.0 250.70 293.9 251.30 302.0 251.90 305.9 252.50 312.4 253.10 321.0 253.70 326.5 254.30 334.9 254.90 342.1 255.50 348.5 256.10 354.2 256.70 359.9 257.30 364.8 257.90 374.4 258.50 379.4 259.10 386.3 259.70 393.6 260.30 401.5 260.90 406.5 261.50 414.6 261.91 417.8 262.10 417.3 262.70 407.2 263.30 401.6 263.90 397.2 264.50 390.0 265.10 384.2 265.70 374.5 266.30 369.2 266.90 364.2 267.50 356.0 268.10 349.9 268.70 344.5 269.30 334.7 269.90 327.6 270.50 324.2 271.10 316.5 271.70 308.3 272.30 304.2 272.90 295.4 273.50 288.2 274.10 282.2 274.70 274.6 275.30 269.4 275.90 264.3 276.37 259.7 276.50 259.3 277.10 267.9 277.70 270.8 278.30 278.0 278.90 284.5 279.50 292.8 280.10 298.0 280.70 306.4 281.30 312.5 281.90 319.3 282.50 327.0 283.10 333.4 283.70 340.6 284.30 344.1 284.90 351.6 285.50 360.6 286.10 365.0 286.70 371.1 287.30 378.5 287.90 383.9 288.50 393.2 289.10 399.0 289.70 403.5 290.30 413.6 290.82 417.1 290.90 416.8 291.50 409.1 292.10 403.9 292.70 398.6 293.30 389.6 293.90 381.6 294.50 375.7 295.10 368.6 295.70 363.8 296.30 356.3 296.90 351.9 297.50 342.7 298.10 335.3 298.70 330.5 299.30 322.5 299.90 316.6 300.50 309.6 301.10 302.8 301.70 298.0 302.30 292.6 302.90 283.7 303.50 278.2 304.10 270.3 304.70 266.1 305.28 259.3 305.30 258.4 305.90 263.0 306.50 272.4 307.10 276.9 307.70 282.9 308.30 289.4 308.90 299.3 309.50 305.4 310.10 310.6 310.70 318.0 311.30 325.2 311.90 329.3 312.50 338.5 313.10 345.1 313.70 352.7 314.30 355.8 314.90 364.4 315.50 370.8 316.10 378.8 316.70 383.5 317.30 391.3 317.90 398.8 318.50 403.3 319.10 410.6 319.70 418.7 319.74 417.3 320.30 409.4 320.90 406.5 321.50 397.3 322.10 391.2 322.70 383.9 323.30 379.4 323.90 371.7 324.50 365.9 325.10 356.7 325.70 353.2 326.30 346.3 326.90 339.2 327.50 330.7 328.10 324.2 328.70 318.4 329.30 310.2 329.90 307.2 330.50 298.3 331.10 293.9 331.70 284.2 332.30 279.4 332.90 273.4 333.50 266.2 334.10 258.7 334.19 254.8 334.70 261.7 335.30 270.0 335.90 276.4 336.50 285.3 337.10 292.0 337.70 298.6 338.30 305.3 338.90 308.6 339.50 314.7 340.10 322.4 340.70 327.9 341.30 334.9 341.90 343.4 342.50 348.5 343.10 356.8 343.70 362.5 344.30 368.7 344.90 378.1 345.50 381.5 346.10 390.9 346.70 396.1 347.30 403.3 347.90 407.9 348.50 416.9 348.64 416.1 349.10 414.0 349.70 404.7 350.30 399.1 350.90 393.2 351.50 385.9 352.10 380.4 352.70 373.3 353.30 365.4 353.90 360.2 354.50 354.0 355.10 346.1 355.70 340.0 356.30 333.6 356.90 326.3 357.50 318.1 358.10 312.8 358.70 307.7 359.30 300.8 359.90 291.6 360.50 286.6 361.10 280.4 361.70 273.6 362.30 265.4 362.90 260.8 363.10 258.9 363.50 263.2 364.10 269.2 364.70 277.4 365.30 282.6 365.90 286.9 366.50 294.7 367.10 302.9 367.70 307.1 368.30 317.2 368.90 322.8 369.50 329.7 370.10 333.9 370.70 339.9 371.30 350.0 371.90 355.1 372.50 361.5 373.10 368.4 373.70 376.0 374.30 381.1 374.90 389.3 375.50 393.5 376.10 403.4 376.70 408.8 377.30 414.0 377.56 415.4 377.90 413.6 378.50 408.6 379.10 399.8 379.70 394.6 380.30 388.8 380.90 382.4 381.50 373.0 382.10 368.5 382.70 361.2 383.30 355.3 383.90 345.8 384.50 340.5 385.10 334.1 385.70 328.9 386.30 320.8 386.90 312.6 387.50 306.6 388.10 302.5 388.70 296.1 389.30 288.2 389.90 279.6 390.50 275.8 391.10 269.5 391.70 260.6 392.01 259.8 392.30 261.1 392.90 267.0 393.50 272.7 394.10 282.0 394.70 286.3 395.30 292.7 395.90 302.6 396.50 305.9 397.10 315.2 397.70 322.0 398.30 326.4 398.90 333.5 399.50 339.5 400.10 348.1 400.70 355.8 401.30 361.5 401.90 367.1 402.50 373.9 403.10 380.0 403.70 387.8 404.30 392.7 404.90 399.2 405.50 407.6 406.10 412.5 406.46 417.5 406.70 416.9 407.30 409.2 407.90 400.4 408.50 393.1 409.10 388.8 409.70 380.3 410.30 375.2 410.90 369.0 411.50 363.2 412.10 354.9 412.70 348.9 413.30 343.3 413.90 334.0 414.50 328.2 415.10 323.5 415.70 315.0 416.30 310.7 416.90 300.7 417.50 294.1 418.10 288.6 418.70 282.4 419.30 275.3 419.90 268.1 420.50 262.4 420.92 256.2 421.10 261.6 421.70 268.4 422.30 273.7 422.90 278.9 423.50 286.8 424.10 291.7 424.70 298.0 425.30 307.5 425.90 312.0 426.50 318.2 427.10 327.5 427.70 331.3 428.30 338.4 428.90 344.7 429.50 354.2 430.10 360.0 430.70 364.6 431.30 370.8 431.90 380.8 432.50 384.3 433.10 393.3 433.70 399.8 434.30 406.0 434.90 412.2 435.38 417.8 435.50 415.8 436.10 408.6 436.70 403.5 437.30 394.9 437.90 389.5 438.50 382.1 439.10 375.9 439.70 371.3 440.30 363.4 440.90 357.1 441.50 350.5 442.10 341.3 442.70 337.8 443.30 331.6 443.90 324.4 444.50 316.9 445.10 311.6 445.70 305.3 446.30 296.1 446.90 289.0 447.50 283.1 448.10 275.2 448.70 269.4 449.30 262.2 449.83 257.2 449.90 256.8 450.50 265.0 451.10 270.0 451.70 278.6 452.30 286.7 452.90 292.7 453.50 296.7 454.10 306.0 454.70 310.5 455.30 319.6 455.90 325.6 456.50 331.8 457.10 338.0 457.70 346.8 458.30 350.3 458.90 359.7 459.50 363.5 460.10 369.7 460.70 376.8 461.30 382.7 461.90 392.5 462.00 391.0" stroke="#1ac4f6" stroke-width="1.2" fill="none" stroke-linejoin="round"/>
<path d="M528.5 188V292M529.5 190V266M530.5 171V268M531.5 206V273M532.5 200V271M533.5 178V296M534.5 172V266M535.5 186V258M536.5 185V254M537.5 171V261M538.5 169V256M539.5 140V262M540.5 183V258M541.5 148V268M542.5 197V259M543.5 186V273M544.5 183V279M545.5 186V247M546.5 195V271M547.5 177V263M548.5 186V258M549.5 183V270M550.5 163V268M551.5 180V270M552.5 162V279M553.5 195V247M554.5 195V272M555.5 160V265M556.5 145V251M557.5 184V273M558.5 140V273M559.5 188V265M560.5 181V264M561.5 181V259M562.5 180V272M563.5 140V264M564.5 140V299M565.5 146V291M566.5 140V248M567.5 172V283M568.5 170V256M569.5 196V300M570.5 192V292M571.5 212V304M572.5 150V293M573.5 140V247M574.5 179V261M575.5 193V268M576.5 200V261M577.5 189V265M578.5 173V309M579.5 209V260M580.5 192V310M581.5 160V287M582.5 200V282M583.5 211V266M584.5 190V295M585.5 187V302M586.5 202V278M587.5 177V251M588.5 191V256M589.5 193V262M590.5 156V286M591.5 189V279M592.5 162V309M593.5 185V259M594.5 165V254M595.5 181V268M596.5 154V310M597.5 156V274M598.5 178V284M599.5 140V265M600.5 180V265M601.5 181V266M602.5 177V271M603.5 174V271M604.5 140V266M605.5 185V297M606.5 181V286M607.5 183V267M608.5 198V254M609.5 197V255M610.5 198V249M611.5 195V310M612.5 192V256M613.5 179V278M614.5 195V310M615.5 172V261M616.5 174V276M617.5 166V261M618.5 161V265M619.5 199V261M620.5 186V307M621.5 186V264M622.5 168V304M623.5 188V263M624.5 180V291M625.5 163V280M626.5 172V296M627.5 141V263M628.5 185V265M629.5 179V256M630.5 207V295M631.5 202V308M632.5 190V278M633.5 191V257M634.5 196V279M635.5 209V264M636.5 183V258M637.5 185V310M638.5 178V257M639.5 168V257M640.5 182V290M641.5 153V264M642.5 186V299M643.5 164V253M644.5 162V288M645.5 171V272M646.5 141V274M647.5 174V284M648.5 174V265M649.5 180V308M650.5 183V273M651.5 178V256M652.5 191V302M653.5 182V258M654.5 169V288M655.5 193V284M656.5 188V272M657.5 175V278M658.5 167V288M659.5 194V276M660.5 152V260M661.5 179V287M662.5 186V260M663.5 209V310M664.5 165V259M665.5 184V242M666.5 186V273M667.5 181V279M668.5 190V272M669.5 203V290M670.5 194V272M671.5 187V252M672.5 147V257M673.5 185V252M674.5 200V243M675.5 178V259M676.5 180V253M677.5 167V274M678.5 145V284M679.5 172V276M680.5 157V274M681.5 168V266M682.5 180V286M683.5 149V252M684.5 182V267M685.5 181V282M686.5 184V244M687.5 140V255M688.5 140V257M689.5 174V258M690.5 185V265M691.5 158V252M692.5 148V284M693.5 172V248M694.5 164V260M695.5 185V263M696.5 165V286M697.5 170V310M698.5 179V256M699.5 176V272M700.5 140V267M701.5 190V254M702.5 153V289M703.5 185V280M704.5 184V276M705.5 149V251M706.5 161V248M707.5 189V285M708.5 158V283M709.5 183V297M710.5 196V284M711.5 190V258M712.5 209V250M713.5 181V267M714.5 174V271M715.5 140V267M716.5 168V268M717.5 146V265M718.5 171V277M719.5 183V268M720.5 168V273M721.5 196V259M722.5 176V305M723.5 209V259M724.5 184V269M725.5 190V310M726.5 170V254M727.5 185V270M728.5 185V265M729.5 192V255M730.5 166V258M731.5 140V269M732.5 180V257M733.5 140V251M734.5 158V255M735.5 166V285M736.5 164V262M737.5 171V261M738.5 198V273M739.5 185V259M740.5 198V267M741.5 183V287M742.5 192V256M743.5 192V293M744.5 182V271M745.5 199V287M746.5 197V265M747.5 204V253M748.5 194V258M749.5 203V310M750.5 208V262M751.5 187V263M752.5 153V276M753.5 194V301M754.5 199V310M755.5 174V268M756.5 195V289M757.5 181V268M758.5 186V266M759.5 183V247M760.5 188V261M761.5 186V267M762.5 181V276M763.5 170V252M764.5 140V254M765.5 177V310M766.5 157V262M767.5 148V270M768.5 171V264M769.5 192V268M770.5 181V272M771.5 168V271M772.5 174V257M773.5 176V285M774.5 179V274M775.5 161V287M776.5 179V307M777.5 172V276M778.5 191V296M779.5 149V267M780.5 178V274M781.5 169V266M782.5 187V274M783.5 175V256M784.5 194V269M785.5 184V263M786.5 171V258M787.5 145V246M788.5 184V285M789.5 188V271M790.5 167V247M791.5 163V261M792.5 159V263M793.5 180V272M794.5 183V293M795.5 172V271M796.5 191V285M797.5 185V270M798.5 177V270M799.5 183V282M800.5 165V272M801.5 180V269M802.5 184V270M803.5 157V280M804.5 145V267M805.5 203V272M806.5 196V270M807.5 194V280M808.5 189V279M809.5 161V266M810.5 195V280M811.5 173V281M812.5 180V291M813.5 191V261M814.5 195V240M815.5 184V261M816.5 222V310M817.5 202V278M818.5 168V261M819.5 198V264M820.5 177V258M821.5 209V276M822.5 180V284M823.5 198V267M824.5 185V277M825.5 140V287M826.5 196V258M827.5 160V265M828.5 195V269M829.5 197V277M830.5 193V272M831.5 186V298M832.5 186V257M833.5 162V278M834.5 193V298M835.5 196V254M836.5 165V278M837.5 202V273M838.5 183V296M839.5 195V270M840.5 189V244M841.5 198V250M842.5 153V260M843.5 184V246M844.5 163V261M845.5 177V265M846.5 164V286M847.5 161V267M848.5 177V272M849.5 164V281M850.5 161V259M851.5 187V257M852.5 194V301M853.5 205V285M854.5 195V284M855.5 140V268M856.5 199V261M857.5 168V254M858.5 168V263M859.5 191V270M860.5 197V267M861.5 147V257M862.5 140V263M863.5 175V287M864.5 183V294M865.5 188V281M866.5 172V256M867.5 186V252M868.5 189V245M869.5 177V270M870.5 193V275M871.5 152V280M872.5 169V246M873.5 140V285M874.5 150V268M875.5 161V274M876.5 160V259M877.5 196V247M878.5 190V243M879.5 184V259M880.5 192V245M881.5 197V257M882.5 207V261M883.5 216V278M884.5 186V284M885.5 179V271M886.5 212V310M887.5 164V271M888.5 170V286M889.5 181V262M890.5 177V274M891.5 168V271M892.5 177V294M893.5 185V277M894.5 163V275M895.5 182V271M896.5 156V274M897.5 172V272M898.5 190V286M899.5 164V271M900.5 179V266M901.5 156V282M902.5 186V296M903.5 173V292M904.5 166V310M905.5 180V264M906.5 186V286M907.5 182V278M908.5 181V275M909.5 178V250M910.5 186V278M911.5 186V268M912.5 191V278M913.5 195V268M914.5 199V280M915.5 182V264M916.5 198V250M917.5 165V245M918.5 195V258M919.5 182V249M920.5 170V253M921.5 163V265M922.5 172V258M923.5 169V283M924.5 148V251M925.5 157V265M926.5 140V299M927.5 171V276M928.5 184V263M929.5 189V283M930.5 190V275M931.5 151V304" stroke="#3c5210" stroke-width="1" fill="none"/>
<path d="M528.5 187V262M529.5 196V267M530.5 190V269M531.5 201V278M532.5 184V273M533.5 193V274M534.5 193V272M535.5 181V253M536.5 181V243M537.5 180V261M538.5 197V247M539.5 174V264M540.5 193V258M541.5 185V262M542.5 200V251M543.5 145V256M544.5 181V251M545.5 178V258M546.5 187V272M547.5 191V263M548.5 186V257M549.5 190V259M550.5 194V276M551.5 180V281M552.5 199V271M553.5 200V245M554.5 193V271M555.5 190V252M556.5 188V256M557.5 185V272M558.5 192V266M559.5 192V270M560.5 177V279M561.5 175V254M562.5 179V252M563.5 179V259M564.5 190V270M565.5 188V289M566.5 179V251M567.5 178V255M568.5 163V256M569.5 156V277M570.5 178V270M571.5 207V265M572.5 195V258M573.5 194V258M574.5 203V260M575.5 192V277M576.5 209V264M577.5 192V274M578.5 193V266M579.5 210V282M580.5 192V281M581.5 170V295M582.5 208V302M583.5 211V267M584.5 156V277M585.5 194V279M586.5 192V273M587.5 193V260M588.5 191V261M589.5 191V270M590.5 179V261M591.5 185V254M592.5 176V279M593.5 172V258M594.5 173V264M595.5 178V251M596.5 180V268M597.5 159V270M598.5 195V265M599.5 176V265M600.5 187V276M601.5 182V268M602.5 187V270M603.5 181V263M604.5 190V286M605.5 187V249M606.5 195V255M607.5 182V263M608.5 196V265M609.5 196V248M610.5 185V250M611.5 193V256M612.5 181V248M613.5 166V260M614.5 179V258M615.5 183V261M616.5 170V266M617.5 170V261M618.5 195V267M619.5 198V259M620.5 188V271M621.5 182V265M622.5 174V289M623.5 183V260M624.5 188V288M625.5 173V252M626.5 160V273M627.5 183V278M628.5 184V263M629.5 186V255M630.5 195V263M631.5 186V264M632.5 193V268M633.5 191V252M634.5 197V272M635.5 207V262M636.5 187V261M637.5 183V262M638.5 192V256M639.5 174V260M640.5 169V256M641.5 168V280M642.5 148V259M643.5 166V257M644.5 185V252M645.5 172V269M646.5 180V265M647.5 188V275M648.5 165V282M649.5 180V297M650.5 191V274M651.5 193V257M652.5 177V275M653.5 200V258M654.5 183V288M655.5 191V289M656.5 185V257M657.5 169V291M658.5 180V279M659.5 183V262M660.5 181V269M661.5 186V267M662.5 202V261M663.5 217V259M664.5 193V269M665.5 183V243M666.5 151V276M667.5 174V252M668.5 179V257M669.5 202V265M670.5 198V266M671.5 187V250M672.5 197V286M673.5 185V279M674.5 181V243M675.5 188V256M676.5 187V256M677.5 176V270M678.5 157V275M679.5 188V265M680.5 199V294M681.5 168V254M682.5 185V254M683.5 181V254M684.5 168V298M685.5 195V254M686.5 171V255M687.5 147V251M688.5 183V275M689.5 171V252M690.5 176V261M691.5 174V256M692.5 185V259M693.5 170V250M694.5 164V261M695.5 181V268M696.5 172V275M697.5 166V268M698.5 166V275M699.5 165V272M700.5 189V265M701.5 180V245M702.5 182V265M703.5 179V259M704.5 176V270M705.5 184V264M706.5 169V259M707.5 183V279M708.5 194V254M709.5 203V276M710.5 191V256M711.5 186V250M712.5 208V239M713.5 170V254M714.5 151V259M715.5 172V273M716.5 179V252M717.5 170V249M718.5 177V267M719.5 197V263M720.5 192V278M721.5 200V257M722.5 180V275M723.5 199V259M724.5 167V267M725.5 198V263M726.5 189V253M727.5 169V261M728.5 176V272M729.5 186V260M730.5 189V257M731.5 187V251M732.5 186V253M733.5 184V273M734.5 192V259M735.5 199V265M736.5 207V263M737.5 192V263M738.5 193V254M739.5 192V271M740.5 188V256M741.5 172V251M742.5 199V251M743.5 200V261M744.5 174V270M745.5 180V281M746.5 196V287M747.5 203V255M748.5 172V264M749.5 213V264M750.5 207V245M751.5 193V260M752.5 197V265M753.5 202V272M754.5 180V284M755.5 188V258M756.5 195V282M757.5 182V264M758.5 167V263M759.5 175V262M760.5 190V258M761.5 190V260M762.5 202V258M763.5 190V245M764.5 188V259M765.5 191V261M766.5 173V268M767.5 160V285M768.5 158V264M769.5 184V276M770.5 183V283M771.5 186V268M772.5 183V266M773.5 190V274M774.5 185V264M775.5 168V243M776.5 188V257M777.5 151V279M778.5 186V293M779.5 190V269M780.5 176V273M781.5 163V263M782.5 175V261M783.5 169V259M784.5 192V274M785.5 184V272M786.5 178V258M787.5 168V252M788.5 181V265M789.5 166V249M790.5 179V250M791.5 170V265M792.5 150V260M793.5 175V263M794.5 197V262M795.5 146V261M796.5 192V259M797.5 184V276M798.5 186V269M799.5 196V281M800.5 175V274M801.5 189V267M802.5 183V261M803.5 173V264M804.5 191V266M805.5 204V259M806.5 189V266M807.5 196V287M808.5 188V281M809.5 198V283M810.5 194V277M811.5 176V286M812.5 191V252M813.5 190V310M814.5 197V245M815.5 188V257M816.5 223V275M817.5 208V271M818.5 186V263M819.5 191V267M820.5 194V265M821.5 209V281M822.5 187V255M823.5 200V249M824.5 181V283M825.5 182V276M826.5 188V269M827.5 181V280M828.5 202V271M829.5 185V263M830.5 195V262M831.5 186V269M832.5 174V259M833.5 176V258M834.5 177V279M835.5 188V249M836.5 179V265M837.5 201V271M838.5 197V284M839.5 176V291M840.5 205V246M841.5 192V249M842.5 200V256M843.5 178V268M844.5 195V252M845.5 146V269M846.5 166V275M847.5 175V265M848.5 176V266M849.5 182V247M850.5 178V256M851.5 207V253M852.5 191V265M853.5 197V281M854.5 196V269M855.5 186V268M856.5 197V265M857.5 167V255M858.5 177V267M859.5 192V259M860.5 192V279M861.5 200V253M862.5 182V274M863.5 170V267M864.5 168V285M865.5 184V264M866.5 174V263M867.5 194V263M868.5 156V242M869.5 182V277M870.5 187V299M871.5 181V266M872.5 173V240M873.5 184V250M874.5 200V254M875.5 194V241M876.5 161V255M877.5 196V253M878.5 184V249M879.5 190V269M880.5 183V252M881.5 194V265M882.5 211V275M883.5 201V286M884.5 159V262M885.5 175V271M886.5 191V284M887.5 193V270M888.5 194V275M889.5 178V263M890.5 191V271M891.5 172V272M892.5 181V293M893.5 181V275M894.5 186V274M895.5 177V272M896.5 199V290M897.5 198V283M898.5 201V272M899.5 187V277M900.5 179V265M901.5 180V286M902.5 185V277M903.5 176V259M904.5 177V274M905.5 195V274M906.5 184V259M907.5 185V260M908.5 184V260M909.5 181V258M910.5 199V251M911.5 165V248M912.5 191V260M913.5 183V270M914.5 204V263M915.5 160V255M916.5 198V250M917.5 188V266M918.5 195V271M919.5 163V253M920.5 168V261M921.5 180V265M922.5 165V255M923.5 161V259M924.5 159V249M925.5 149V270M926.5 183V262M927.5 150V257M928.5 170V310M929.5 185V265M930.5 192V275M931.5 184V291" stroke="#6c8e18" stroke-width="1" fill="none"/>
<path d="M528.5 191V255M529.5 199V266M530.5 192V266M531.5 207V265M532.5 206V268M533.5 194V255M534.5 200V256M535.5 192V244M536.5 187V236M537.5 185V260M538.5 198V245M539.5 184V245M540.5 197V257M541.5 185V258M542.5 202V250M543.5 196V248M544.5 184V250M545.5 194V247M546.5 199V262M547.5 195V260M548.5 187V256M549.5 192V257M550.5 196V257M551.5 186V268M552.5 203V263M553.5 206V241M554.5 206V262M555.5 194V250M556.5 190V249M557.5 193V261M558.5 200V253M559.5 196V250M560.5 187V261M561.5 195V251M562.5 185V249M563.5 181V256M564.5 191V259M565.5 189V257M566.5 191V245M567.5 179V253M568.5 174V252M569.5 197V266M570.5 195V257M571.5 215V262M572.5 197V257M573.5 199V244M574.5 210V253M575.5 195V259M576.5 214V251M577.5 197V256M578.5 201V266M579.5 214V259M580.5 194V271M581.5 190V272M582.5 210V274M583.5 213V264M584.5 193V265M585.5 197V275M586.5 203V267M587.5 202V248M588.5 195V256M589.5 196V259M590.5 187V252M591.5 189V250M592.5 184V273M593.5 188V258M594.5 189V254M595.5 182V250M596.5 182V253M597.5 184V269M598.5 195V255M599.5 178V253M600.5 190V259M601.5 183V266M602.5 192V267M603.5 195V260M604.5 199V265M605.5 189V244M606.5 197V247M607.5 196V245M608.5 199V251M609.5 205V243M610.5 199V246M611.5 196V256M612.5 193V246M613.5 182V257M614.5 197V253M615.5 188V257M616.5 191V252M617.5 186V254M618.5 202V255M619.5 199V254M620.5 194V263M621.5 189V264M622.5 192V269M623.5 191V260M624.5 188V268M625.5 175V250M626.5 173V267M627.5 183V263M628.5 186V262M629.5 190V254M630.5 209V260M631.5 205V263M632.5 197V266M633.5 195V250M634.5 199V267M635.5 210V257M636.5 188V251M637.5 185V262M638.5 197V254M639.5 189V249M640.5 186V248M641.5 180V255M642.5 192V254M643.5 170V251M644.5 186V252M645.5 176V262M646.5 187V264M647.5 192V273M648.5 191V261M649.5 184V278M650.5 201V267M651.5 196V253M652.5 195V268M653.5 203V257M654.5 188V269M655.5 193V270M656.5 191V257M657.5 182V259M658.5 199V276M659.5 194V259M660.5 183V256M661.5 188V264M662.5 214V258M663.5 221V258M664.5 203V259M665.5 185V241M666.5 192V272M667.5 196V251M668.5 193V253M669.5 203V262M670.5 198V259M671.5 196V248M672.5 200V255M673.5 198V247M674.5 202V242M675.5 195V248M676.5 200V252M677.5 185V262M678.5 173V262M679.5 191V264M680.5 208V274M681.5 193V253M682.5 188V248M683.5 185V252M684.5 184V261M685.5 199V245M686.5 191V240M687.5 178V248M688.5 190V254M689.5 175V251M690.5 187V250M691.5 181V251M692.5 185V250M693.5 180V246M694.5 181V254M695.5 188V260M696.5 178V264M697.5 183V258M698.5 179V254M699.5 176V266M700.5 191V263M701.5 198V244M702.5 198V260M703.5 191V257M704.5 185V266M705.5 195V247M706.5 182V245M707.5 191V264M708.5 196V245M709.5 211V253M710.5 198V251M711.5 195V248M712.5 210V239M713.5 185V248M714.5 177V254M715.5 182V252M716.5 181V252M717.5 171V247M718.5 183V265M719.5 198V263M720.5 200V271M721.5 200V252M722.5 201V265M723.5 213V256M724.5 187V266M725.5 201V263M726.5 190V250M727.5 195V259M728.5 188V262M729.5 199V254M730.5 203V251M731.5 192V239M732.5 189V243M733.5 200V243M734.5 193V252M735.5 201V259M736.5 209V260M737.5 192V259M738.5 203V245M739.5 194V255M740.5 199V253M741.5 193V249M742.5 204V249M743.5 203V260M744.5 194V260M745.5 199V273M746.5 201V261M747.5 205V248M748.5 196V253M749.5 213V263M750.5 208V241M751.5 196V257M752.5 202V258M753.5 203V270M754.5 199V264M755.5 198V257M756.5 195V265M757.5 184V259M758.5 188V262M759.5 187V246M760.5 195V258M761.5 192V248M762.5 203V251M763.5 195V245M764.5 204V253M765.5 192V258M766.5 176V262M767.5 177V269M768.5 180V262M769.5 192V260M770.5 183V270M771.5 194V263M772.5 184V257M773.5 190V266M774.5 185V264M775.5 176V237M776.5 190V255M777.5 176V262M778.5 193V264M779.5 195V257M780.5 180V272M781.5 173V259M782.5 187V258M783.5 182V255M784.5 194V257M785.5 187V263M786.5 181V257M787.5 186V245M788.5 189V259M789.5 198V245M790.5 185V246M791.5 177V259M792.5 181V254M793.5 187V261M794.5 198V252M795.5 173V261M796.5 192V259M797.5 197V264M798.5 187V261M799.5 209V268M800.5 190V271M801.5 193V267M802.5 186V259M803.5 180V262M804.5 192V264M805.5 208V251M806.5 197V250M807.5 196V277M808.5 191V277M809.5 202V263M810.5 198V263M811.5 181V252M812.5 192V247M813.5 194V253M814.5 210V240M815.5 188V256M816.5 227V245M817.5 208V248M818.5 187V259M819.5 206V263M820.5 205V250M821.5 210V266M822.5 190V248M823.5 207V249M824.5 191V258M825.5 188V268M826.5 197V257M827.5 189V262M828.5 204V263M829.5 199V259M830.5 197V262M831.5 199V268M832.5 191V255M833.5 184V257M834.5 193V263M835.5 198V248M836.5 202V263M837.5 206V269M838.5 198V267M839.5 208V264M840.5 205V244M841.5 206V245M842.5 209V248M843.5 186V246M844.5 196V249M845.5 187V263M846.5 172V272M847.5 191V259M848.5 185V263M849.5 201V247M850.5 197V253M851.5 210V252M852.5 202V245M853.5 206V258M854.5 196V265M855.5 190V261M856.5 200V257M857.5 186V253M858.5 196V260M859.5 195V256M860.5 199V257M861.5 204V248M862.5 188V263M863.5 181V261M864.5 184V267M865.5 194V263M866.5 181V255M867.5 194V250M868.5 189V239M869.5 195V254M870.5 197V262M871.5 188V266M872.5 175V239M873.5 191V250M874.5 202V250M875.5 196V241M876.5 192V247M877.5 205V246M878.5 197V242M879.5 196V249M880.5 195V243M881.5 198V255M882.5 211V261M883.5 217V274M884.5 188V260M885.5 187V270M886.5 212V275M887.5 197V266M888.5 196V271M889.5 187V262M890.5 192V268M891.5 194V269M892.5 185V282M893.5 187V269M894.5 190V273M895.5 205V261M896.5 210V261M897.5 199V266M898.5 204V258M899.5 189V268M900.5 181V264M901.5 181V274M902.5 188V276M903.5 189V255M904.5 183V271M905.5 196V258M906.5 187V256M907.5 189V254M908.5 194V257M909.5 181V248M910.5 200V249M911.5 187V248M912.5 200V256M913.5 201V261M914.5 205V260M915.5 194V250M916.5 198V248M917.5 193V242M918.5 204V254M919.5 184V247M920.5 172V248M921.5 180V261M922.5 172V250M923.5 178V247M924.5 163V240M925.5 179V263M926.5 197V259M927.5 174V256M928.5 186V262M929.5 191V262M930.5 194V262M931.5 201V279" stroke="#92b826" stroke-width="1" fill="none"/>
<path d="M582 255h1M579 252h1M815 218h1M539 213h1M749 224h1M556 241h1M923 259h1M779 223h1M707 222h1M795 217h1M668 243h1M846 221h1M908 240h1M857 206h1M582 234h1M610 210h1M925 207h1M670 215h1M767 192h1M852 226h1M842 220h1M716 209h1M920 241h1M889 218h1M874 248h1M800 220h1M930 233h1M615 230h1M706 197h1M667 210h1M809 228h1M651 209h1M592 255h1M859 239h1M807 234h1M605 196h1M869 239h1M656 233h1M729 242h1M537 215h1M700 233h1M579 206h1M585 223h1M769 236h1M696 249h1M853 238h1M809 239h1M535 253h1M792 190h1M727 244h1M626 223h1M655 203h1M676 197h1M908 237h1M840 190h1M654 218h1M571 230h1M555 258h1M869 212h1M560 260h1M795 234h1M757 232h1M902 225h1M599 209h1M586 234h1M804 223h1M889 220h1M556 214h1M673 252h1M585 193h1M586 254h1M552 226h1M614 193h1M592 254h1M620 207h1M774 211h1M785 207h1M574 219h1M593 229h1M659 249h1M565 245h1M580 216h1M896 193h1M895 212h1M754 238h1M690 254h1M810 243h1M919 223h1M804 210h1M854 214h1M547 200h1M766 223h1M853 231h1M847 223h1M542 249h1M685 238h1M744 209h1M679 233h1M645 235h1M807 237h1M751 229h1M694 192h1M632 221h1M566 228h1M749 215h1M759 243h1M850 232h1M790 227h1M892 215h1M676 214h1M788 234h1M807 238h1M882 196h1M811 208h1M754 209h1M913 213h1M756 231h1M871 201h1M857 206h1M729 226h1M728 199h1M731 191h1M830 236h1M778 237h1M632 232h1M872 247h1M602 231h1M695 246h1M871 232h1M734 222h1M908 204h1M555 242h1M700 201h1M545 233h1M903 246h1M576 214h1M874 215h1M816 222h1M631 229h1M817 210h1M704 193h1M713 204h1M920 243h1M613 224h1M674 249h1M549 228h1M839 216h1M826 232h1M796 206h1M546 193h1M743 220h1M886 217h1M903 263h1M829 216h1M654 246h1M760 241h1M625 216h1M854 241h1M843 243h1M575 211h1M544 253h1M800 233h1M746 259h1M645 198h1M656 225h1M807 199h1M813 233h1M918 199h1M631 216h1M752 231h1M662 239h1M753 226h1M689 235h1M721 251h1M686 228h1M770 237h1M891 202h1M909 259h1M851 232h1M766 233h1M688 214h1M554 210h1M850 231h1M843 254h1M716 214h1M565 220h1M675 217h1M785 200h1M532 234h1M668 197h1M877 232h1M628 229h1M528 235h1M619 224h1M662 211h1M679 209h1M886 208h1M651 224h1M761 224h1M656 228h1M656 208h1M751 253h1M835 222h1M671 206h1M531 221h1M640 245h1M908 229h1M825 232h1M579 253h1M868 217h1M694 253h1M797 223h1M735 208h1M606 211h1M620 237h1M803 220h1M678 235h1M862 233h1M761 220h1M627 237h1M577 256h1M651 238h1M908 246h1M681 222h1M770 192h1M538 235h1M732 233h1M641 235h1M748 232h1M884 225h1M864 236h1M816 213h1M600 223h1M543 234h1M813 213h1M897 228h1M698 231h1M620 197h1M808 212h1M561 260h1M665 213h1M723 234h1M889 233h1M870 259h1M710 235h1M902 233h1M588 237h1M565 220h1M769 224h1M854 220h1M821 224h1M777 213h1M661 247h1M864 253h1M921 223h1M603 216h1M723 246h1M787 227h1M897 224h1M659 194h1M930 199h1M887 197h1M920 223h1M632 188h1M654 192h1M661 210h1M924 214h1M756 193h1M840 254h1M600 208h1M819 219h1M578 217h1M620 246h1M606 215h1M719 228h1M657 255h1M858 215h1M690 235h1M917 217h1M545 249h1M620 262h1M575 221h1M588 238h1M675 225h1M673 202h1M727 241h1M828 228h1M744 241h1M728 209h1M617 240h1M760 191h1M760 246h1M712 230h1M863 224h1M754 191h1M551 227h1M609 198h1M822 247h1M899 223h1M808 232h1M803 199h1M590 209h1M720 233h1M859 218h1M924 251h1M739 216h1M845 197h1M873 241h1M924 218h1M727 202h1M742 203h1M865 233h1M799 232h1M912 241h1M900 242h1M598 248h1M734 219h1M660 235h1M889 224h1M720 197h1M657 256h1M580 221h1M778 195h1M777 253h1M750 249h1M916 191h1M653 208h1M823 204h1M722 250h1M589 224h1M638 236h1M801 205h1M571 206h1M724 233h1M592 238h1M670 195h1M668 213h1M700 195h1M886 213h1M572 249h1M827 249h1M811 220h1M831 249h1M777 232h1M751 254h1M814 212h1M687 225h1M907 236h1M542 228h1M594 190h1M768 206h1M559 205h1M785 195h1M642 205h1M560 221h1M598 230h1M609 262h1M908 253h1M530 231h1M739 219h1M557 203h1M789 200h1M667 254h1M707 242h1M890 208h1M574 247h1M786 231h1M617 188h1M789 212h1M691 227h1M566 218h1M763 261h1M722 198h1M570 233h1M610 194h1M704 204h1M554 226h1M561 221h1M850 230h1M757 232h1M682 253h1M573 245h1M785 190h1M756 250h1M539 228h1M765 201h1M614 197h1M581 261h1M575 222h1M673 221h1M782 194h1M872 224h1M835 237h1M644 235h1M631 230h1M771 217h1M605 223h1M905 211h1M652 233h1M836 232h1M746 257h1M669 199h1M692 234h1M638 220h1M762 247h1M880 229h1M910 250h1M809 191h1M580 257h1M675 208h1M681 244h1M614 201h1M557 199h1M572 243h1M778 215h1M783 205h1M636 219h1M914 240h1M634 197h1M727 218h1M669 200h1M733 262h1M762 221h1M714 225h1M854 210h1M594 259h1M897 234h1M607 233h1M634 224h1M861 244h1M851 217h1M884 234h1M745 225h1M774 240h1M558 205h1M619 232h1M539 222h1M553 213h1M608 212h1M791 209h1M758 212h1M795 213h1M829 258h1M711 222h1M763 194h1M562 236h1M577 240h1M620 227h1M627 252h1M577 202h1M766 256h1M605 213h1M685 218h1M619 247h1M705 222h1M685 221h1M875 193h1M827 244h1M586 217h1M718 212h1M784 241h1M763 233h1M782 204h1M851 215h1M587 228h1M548 230h1M929 219h1M748 230h1M847 260h1M770 208h1M639 254h1M795 230h1M844 212h1M781 191h1M862 251h1M787 205h1M845 200h1M710 209h1M830 225h1M798 240h1M753 202h1M604 201h1M620 194h1M896 210h1M598 207h1M774 197h1M887 251h1M670 200h1M541 203h1M764 250h1M735 207h1M636 224h1M800 194h1M659 217h1M619 222h1M572 240h1M777 231h1M779 196h1M855 209h1M908 217h1M575 240h1M704 231h1M564 240h1M578 222h1M907 205h1M741 235h1M716 244h1M648 236h1M844 214h1M822 227h1M756 211h1M789 200h1M912 246h1M782 239h1M552 236h1M658 248h1M777 231h1M630 248h1M824 232h1M877 233h1M652 198h1M833 250h1M926 187h1M588 222h1M876 203h1M919 225h1M647 249h1M616 193h1M793 237h1M547 257h1M833 230h1M919 227h1M585 250h1M530 211h1M537 223h1M701 231h1M649 211h1M695 231h1M546 239h1M925 235h1M537 247h1M898 225h1M830 198h1M896 199h1M636 204h1M683 256h1M832 238h1M836 256h1M747 204h1M539 216h1M876 219h1M555 196h1M607 260h1M671 244h1M803 227h1M782 228h1M693 195h1M730 223h1M810 233h1M914 202h1M540 254h1M925 245h1M759 190h1M874 207h1M696 226h1M696 201h1M541 239h1M833 193h1M786 206h1M825 221h1M728 208h1M903 244h1M851 242h1M750 205h1M777 221h1M895 194h1M612 227h1M805 215h1M914 242h1M607 244h1M784 241h1M724 197h1M603 247h1M852 208h1M580 234h1M838 257h1M680 245h1M576 221h1M924 237h1M661 222h1M679 255h1M758 209h1M806 253h1M659 238h1M789 192h1M593 204h1M831 204h1M869 222h1M686 250h1M834 223h1M869 195h1M703 230h1M839 236h1M551 229h1M861 203h1M820 235h1M927 234h1M773 211h1M767 212h1M807 233h1M837 199h1M631 206h1M607 227h1M686 223h1M875 219h1M872 228h1M718 217h1M916 237h1M717 222h1M894 234h1M824 243h1M871 224h1M637 197h1M615 255h1M625 218h1M673 244h1M677 242h1M734 222h1M730 202h1M669 195h1M528 256h1M639 224h1M732 213h1M867 199h1M796 260h1M668 259h1M624 200h1M754 199h1M669 238h1M843 236h1M846 229h1M623 225h1M740 224h1M783 221h1M538 228h1M907 230h1M634 234h1M551 222h1M829 236h1M879 219h1M571 221h1M906 223h1M864 225h1M687 215h1M771 190h1M684 239h1M790 233h1M693 242h1M792 253h1M697 203h1M808 217h1M640 213h1M823 257h1M835 209h1M689 241h1M696 237h1M875 248h1M768 230h1M873 230h1M838 221h1M610 225h1M909 221h1M642 216h1M898 262h1M880 246h1M811 212h1M696 219h1M601 230h1M814 221h1M586 246h1M738 203h1M584 216h1M649 229h1M805 199h1M641 240h1M786 226h1M767 211h1M575 228h1M706 243h1M894 222h1M754 256h1M719 232h1M878 232h1M852 202h1M845 231h1M791 248h1M687 220h1M817 253h1M847 241h1M799 256h1M930 255h1M762 195h1M921 244h1M703 213h1M559 238h1M652 215h1M624 222h1M611 230h1M784 216h1M648 219h1M539 214h1M806 236h1M910 223h1M629 227h1M753 201h1M779 245h1M691 215h1M765 229h1M770 230h1M624 241h1M930 223h1M664 217h1M667 221h1M577 207h1M669 206h1M813 262h1M860 211h1M729 213h1M697 237h1M829 235h1M888 245h1M747 256h1M546 217h1M771 197h1M805 216h1M829 242h1M752 228h1M612 217h1M732 219h1M806 234h1M529 241h1M615 193h1M660 211h1M839 217h1M756 200h1M815 220h1M707 216h1M820 213h1M909 201h1M550 219h1M929 232h1M869 225h1M811 198h1M844 233h1M832 236h1M794 209h1M854 244h1M790 233h1M896 240h1M684 193h1M877 197h1M637 200h1M747 205h1M530 243h1M906 221h1M858 241h1M698 212h1M576 226h1M629 244h1M763 226h1M559 241h1M666 238h1M564 217h1M617 231h1M778 236h1M629 242h1M817 222h1M745 195h1M839 256h1M587 224h1M632 257h1M881 232h1M677 240h1M623 238h1M607 207h1M890 222h1M555 214h1M545 207h1M921 232h1M762 216h1M580 234h1M655 243h1M594 207h1M745 217h1M578 205h1M544 222h1M918 205h1M769 222h1M778 220h1M895 204h1M928 208h1M585 222h1M661 249h1M834 193h1M712 260h1M579 213h1M564 205h1M706 250h1M785 214h1M863 230h1M923 226h1M668 245h1M864 219h1M791 249h1M604 249h1M587 248h1M833 221h1M706 205h1M553 222h1M927 228h1M700 240h1M561 227h1M828 208h1M725 238h1M906 222h1M563 219h1M892 222h1M897 242h1M895 217h1M916 218h1M742 189h1M697 251h1M573 242h1M689 253h1M829 232h1M695 250h1M558 213h1M721 231h1M678 211h1M899 260h1M620 259h1M599 225h1M707 204h1M722 263h1M607 213h1M758 248h1M930 226h1M772 201h1M558 216h1M599 237h1M628 246h1M905 239h1M789 261h1M810 257h1M723 252h1M778 252h1M575 232h1M855 201h1M531 190h1M613 225h1M656 199h1M621 211h1M652 240h1M673 222h1M540 254h1M601 238h1M745 202h1M790 228h1M539 229h1M796 202h1M595 218h1M782 248h1M907 245h1M545 239h1M814 214h1M693 214h1M644 193h1M687 235h1M617 198h1M606 213h1M715 199h1M884 239h1M641 257h1M702 255h1M899 251h1M581 188h1M898 244h1M644 256h1M779 262h1M550 202h1M757 219h1M877 255h1M703 242h1M714 215h1M658 239h1M531 230h1M757 256h1M817 234h1M745 241h1M780 214h1M791 230h1M768 233h1M548 205h1M710 200h1M842 233h1M737 255h1M763 201h1M893 237h1M647 247h1M797 233h1M684 251h1M721 209h1M892 191h1M570 242h1M653 249h1M763 200h1M809 205h1M731 240h1M608 233h1M782 232h1M682 238h1M704 263h1M850 224h1M792 196h1M710 199h1M666 230h1M814 216h1M866 215h1M572 228h1M860 213h1M852 232h1M593 233h1M847 226h1M754 228h1M730 224h1M776 243h1M769 215h1M629 215h1M799 225h1M766 212h1M813 252h1M752 222h1M549 231h1M670 244h1M931 228h1M566 247h1M860 230h1M861 199h1M661 206h1M712 243h1M699 216h1M570 217h1M748 221h1M866 193h1M774 223h1M813 203h1M568 210h1M729 230h1M618 215h1M757 202h1M582 208h1M785 237h1M576 233h1M732 233h1M694 229h1M759 260h1M536 216h1M879 234h1M657 219h1M743 240h1M572 230h1M745 225h1M781 225h1M656 231h1M700 191h1M581 216h1M887 218h1M858 213h1M811 218h1M689 215h1M535 257h1M744 238h1M869 198h1M736 237h1M597 234h1M813 199h1M761 251h1M555 218h1M709 249h1M667 187h1M650 198h1M605 201h1M561 227h1M535 216h1M895 238h1M787 203h1M802 256h1M725 217h1M709 233h1M634 216h1M930 230h1M778 237h1M676 248h1M563 229h1M794 237h1M789 223h1M813 259h1M629 203h1M826 255h1M783 209h1M898 232h1M629 211h1M927 240h1M840 221h1M755 222h1M564 199h1M556 216h1M789 197h1M858 189h1M536 224h1M860 220h1M614 202h1M906 214h1M657 192h1M538 257h1M554 224h1M849 213h1M564 196h1M732 241h1M675 237h1M656 227h1M684 227h1M534 204h1M615 245h1M931 221h1M924 213h1M731 254h1M928 206h1M574 191h1M842 212h1M823 219h1M891 222h1M902 211h1M897 223h1M756 220h1M644 262h1M858 227h1M886 209h1M817 201h1M926 188h1M709 237h1M819 198h1M881 223h1M866 190h1M619 263h1M543 205h1M615 235h1M607 252h1M818 216h1M857 228h1M766 249h1M601 252h1M735 216h1M902 203h1M590 207h1M598 204h1M711 243h1M604 225h1M905 222h1M792 226h1M895 247h1M690 197h1M718 230h1M618 203h1M533 230h1M858 222h1M749 251h1M797 229h1M873 233h1M580 235h1M695 231h1M629 250h1M638 195h1M584 218h1M863 200h1M577 216h1M742 241h1M859 219h1M779 213h1M588 199h1M853 247h1M848 231h1M575 220h1M834 208h1M880 252h1M668 228h1M584 243h1M602 207h1M927 196h1M906 249h1M566 202h1M874 229h1M705 237h1M583 190h1M733 227h1M722 239h1M560 232h1M597 210h1M758 226h1M751 215h1M645 259h1M662 247h1M655 208h1M856 215h1M726 239h1M667 204h1M785 226h1M834 219h1M703 251h1M567 236h1M923 188h1M694 210h1M672 242h1M741 215h1M575 226h1M694 207h1M586 197h1M574 190h1M661 231h1M846 254h1M799 216h1M802 198h1M872 230h1M715 218h1M791 194h1M605 237h1M711 258h1M737 248h1M825 251h1M861 217h1M662 222h1M546 196h1M858 216h1M689 238h1M833 224h1M872 207h1M906 195h1M629 212h1M879 195h1M578 230h1M898 196h1M805 224h1M873 220h1M711 234h1M912 219h1M772 246h1M889 202h1M596 236h1M926 242h1M610 210h1M661 254h1M656 229h1M902 253h1M815 223h1M931 218h1M751 248h1M912 212h1M689 224h1M718 233h1M784 235h1M844 210h1M798 232h1M765 226h1M681 223h1M770 241h1M853 233h1M754 226h1M588 259h1M758 221h1M539 219h1M714 229h1M671 227h1M807 248h1M750 216h1M682 220h1M776 223h1M899 255h1M536 189h1M926 225h1M799 248h1M626 254h1M620 209h1M575 228h1M675 212h1M720 239h1M577 197h1M569 251h1M684 192h1M758 249h1M787 190h1M831 216h1M744 227h1M890 237h1M844 249h1M672 243h1M910 203h1M768 238h1M920 230h1M919 250h1M566 247h1M736 213h1M758 235h1M644 235h1M535 250h1M707 214h1M620 190h1M811 249h1M687 239h1M677 238h1M672 246h1M839 217h1M683 221h1M660 218h1M757 226h1M847 189h1M923 231h1M771 190h1M568 227h1M662 232h1M849 208h1M823 233h1M781 250h1M587 222h1M543 237h1M875 222h1M534 233h1M779 263h1M659 207h1M583 220h1M635 212h1M807 250h1M692 260h1M589 218h1M657 247h1M848 229h1M803 239h1M743 202h1M552 195h1M598 216h1M715 191h1M650 228h1M603 253h1M571 252h1M652 254h1M792 238h1M747 249h1M870 234h1M649 219h1M557 241h1M717 209h1M695 210h1M885 225h1M703 251h1M796 229h1M634 263h1M757 226h1M722 240h1M761 232h1M819 233h1M753 201h1M581 235h1M530 216h1M545 230h1M911 208h1M742 253h1M745 201h1M858 232h1M802 227h1M587 217h1M706 213h1M582 189h1M550 203h1M802 220h1M560 226h1M850 209h1M622 227h1M710 220h1M751 194h1M552 205h1M717 221h1M637 211h1M860 215h1M691 221h1M898 232h1M570 223h1M616 201h1M674 235h1M804 204h1M661 225h1M829 194h1M740 237h1M782 221h1M816 192h1M541 242h1M759 234h1M857 213h1M750 252h1M734 231h1M589 228h1M752 259h1M727 223h1M888 189h1M754 237h1M894 226h1M853 235h1M652 250h1M685 244h1M569 256h1M552 211h1M638 236h1M656 237h1M591 250h1M719 229h1M659 219h1M886 217h1M585 245h1M890 215h1M882 229h1M714 214h1M887 234h1M845 230h1M693 234h1M712 229h1M893 187h1M854 240h1M647 219h1M647 233h1M558 220h1M855 208h1M533 234h1M868 224h1M640 232h1M719 224h1M680 219h1M558 233h1M591 214h1M639 222h1M843 236h1M841 241h1M871 233h1M604 239h1M909 222h1M586 251h1M569 236h1M576 260h1M704 189h1M719 263h1M698 260h1M808 198h1M917 195h1M857 218h1M907 227h1M700 235h1M787 238h1M717 191h1M637 258h1M749 230h1M931 253h1M853 222h1M803 214h1M547 225h1M795 220h1M813 245h1M750 213h1M724 222h1M774 210h1M597 245h1M845 206h1M708 257h1M901 204h1M786 229h1M853 199h1M726 189h1M927 234h1M544 239h1M857 234h1M615 241h1M558 251h1M535 247h1M708 218h1M669 234h1M585 193h1M910 207h1M918 224h1M910 236h1M846 235h1M902 257h1M833 232h1M913 220h1M757 207h1M537 207h1M749 249h1M813 210h1M623 232h1M780 242h1M816 234h1M659 224h1M854 220h1M733 255h1M881 249h1M766 229h1M595 218h1M875 217h1M828 223h1M753 225h1M715 239h1M546 224h1M803 256h1M891 211h1M563 256h1M639 249h1M921 198h1M687 195h1M915 252h1M795 193h1M645 213h1M725 223h1M653 239h1M773 214h1M749 215h1M822 233h1M800 200h1M716 213h1M880 210h1M626 216h1M562 209h1M912 241h1M563 197h1M917 212h1M822 229h1M678 213h1M811 235h1M635 228h1M875 232h1M717 221h1M641 195h1M761 248h1M541 187h1M799 255h1M629 233h1M593 222h1M704 250h1M763 250h1M530 189h1M568 188h1M627 204h1M889 235h1M802 194h1M795 202h1M839 205h1M774 220h1M897 255h1M753 203h1M686 259h1M752 245h1M688 203h1M878 212h1M855 231h1M784 201h1M822 210h1M823 211h1M699 233h1M596 230h1M767 195h1M859 230h1M896 260h1M587 220h1M927 207h1M698 234h1M860 211h1M549 215h1M656 238h1M736 199h1M695 218h1M833 216h1M726 211h1M654 239h1M627 238h1M623 222h1M641 243h1M725 207h1M807 253h1M893 204h1M796 247h1M787 242h1M583 213h1M762 189h1M803 233h1M835 229h1M594 241h1M530 236h1M865 201h1M818 260h1M927 198h1M767 207h1M824 224h1M546 229h1M575 238h1M770 219h1M891 246h1M661 217h1M758 237h1M606 218h1M754 243h1M677 214h1M654 213h1M610 239h1M685 231h1M812 234h1M784 205h1M783 210h1M829 241h1M720 215h1M546 192h1M635 212h1M846 227h1M847 213h1M648 224h1M926 217h1M778 237h1M808 207h1M546 210h1M694 227h1M632 232h1M711 256h1M536 262h1M908 242h1M840 217h1M864 238h1M828 226h1M678 226h1M761 247h1M600 213h1M675 227h1M881 218h1M590 253h1M905 225h1M816 220h1M652 215h1M637 254h1M832 218h1M644 220h1M694 216h1M556 232h1M707 255h1M781 251h1M885 221h1M665 241h1M648 243h1M760 232h1M807 224h1M904 232h1M588 192h1M918 205h1M842 262h1M626 232h1M780 229h1M713 214h1M790 244h1M603 217h1M646 229h1M723 227h1M729 223h1M751 226h1M868 200h1M556 241h1M556 205h1M717 215h1M678 224h1M678 223h1M910 231h1M912 244h1M634 214h1M798 218h1M699 222h1M895 207h1M563 235h1M749 235h1M775 210h1M793 246h1M697 231h1M579 251h1M926 247h1M591 216h1M601 216h1M541 232h1M568 211h1M815 212h1M745 232h1M657 211h1M825 213h1M880 226h1M913 211h1M855 209h1M534 250h1M659 206h1M548 218h1M682 242h1M581 189h1M683 224h1M596 226h1M586 200h1M715 232h1M715 229h1M640 243h1M879 213h1M849 229h1M739 207h1M900 247h1M571 220h1M733 220h1M532 226h1M712 221h1M549 243h1M769 206h1M551 237h1M596 215h1M857 258h1M848 222h1M754 252h1M794 223h1M554 226h1M927 226h1M873 246h1M539 252h1M777 246h1M736 212h1M767 197h1M672 232h1M600 187h1M836 240h1M907 244h1M555 259h1M531 234h1M652 230h1M681 248h1M646 229h1M896 196h1M757 229h1M725 226h1M733 214h1M719 224h1M654 213h1M860 218h1M840 253h1M905 210h1M915 225h1M779 249h1M750 227h1M805 252h1M586 216h1M753 223h1M900 215h1M718 258h1M637 211h1M764 210h1M736 256h1M926 247h1M881 241h1M651 244h1M598 249h1M786 244h1M594 243h1M533 199h1M781 215h1M700 245h1M904 202h1M885 253h1M585 206h1M883 230h1M671 237h1M557 227h1M805 243h1M643 200h1M657 223h1M814 212h1M685 225h1M770 224h1M750 228h1M729 219h1M566 238h1M883 252h1M564 232h1M679 229h1M733 262h1M546 208h1M739 227h1M631 242h1M650 228h1M864 233h1M637 201h1M563 211h1M882 228h1M786 234h1M845 213h1M589 253h1M632 246h1M542 237h1M835 247h1M683 243h1M789 208h1M832 192h1M653 208h1M774 256h1M847 218h1M766 207h1M792 224h1M551 209h1M534 247h1M630 242h1M885 229h1M867 193h1M820 189h1M886 242h1M541 198h1M851 221h1M622 246h1M614 201h1M852 208h1M808 240h1M699 253h1M850 222h1M818 253h1M603 201h1M644 223h1M879 214h1M754 215h1M661 222h1M784 233h1M903 226h1M599 197h1M691 209h1M712 234h1M620 245h1M599 258h1M746 235h1M605 196h1M905 226h1M780 244h1M695 229h1M624 217h1M538 245h1M632 227h1M780 244h1M858 188h1M843 255h1M703 232h1M924 229h1M789 250h1M730 232h1M779 262h1M836 216h1M866 225h1M588 249h1M684 209h1M689 212h1M622 230h1M887 218h1M894 244h1M611 225h1M602 211h1M908 254h1M657 219h1M763 227h1M904 204h1M769 246h1M845 250h1M862 223h1M930 255h1M687 261h1M542 254h1M758 244h1M915 237h1M806 240h1M838 219h1M535 239h1M662 234h1M602 229h1M538 228h1M926 214h1M674 253h1M589 203h1M789 262h1M753 226h1M815 244h1M543 239h1M692 194h1M832 210h1M711 262h1M757 217h1M672 233h1M791 227h1M649 212h1M706 192h1M796 210h1M566 215h1M902 214h1M863 226h1M816 202h1M854 232h1M901 253h1M897 198h1M725 242h1M684 195h1M855 229h1M885 208h1M560 248h1M785 231h1M864 226h1M677 221h1M697 254h1M894 243h1M624 260h1M860 191h1M617 244h1M778 224h1M575 242h1M539 211h1M916 219h1M578 192h1M864 232h1M692 228h1M747 229h1M660 230h1M919 225h1M624 240h1M591 219h1M833 227h1M644 250h1M896 227h1M898 233h1M873 250h1M692 234h1M692 244h1M600 194h1M626 240h1M732 232h1M592 221h1M622 252h1M917 200h1M726 218h1M794 196h1M530 222h1M796 235h1M664 254h1M823 249h1M738 199h1M843 253h1M629 226h1M896 217h1M687 218h1M591 229h1M602 231h1M758 212h1M825 208h1M696 203h1M585 216h1M760 222h1M781 213h1M620 232h1M683 195h1M835 217h1M883 241h1M681 189h1M708 214h1M763 229h1M745 205h1M709 207h1M793 240h1M885 212h1M618 209h1M675 233h1M870 213h1M554 217h1M536 221h1M914 203h1M726 229h1M746 226h1M743 202h1M781 212h1M917 247h1M644 256h1M575 259h1M744 218h1M531 196h1M643 229h1M762 226h1M646 235h1M905 200h1M539 223h1M799 225h1M683 239h1M816 218h1M787 262h1M808 222h1M772 204h1M619 233h1M671 243h1M753 219h1M830 228h1M683 226h1M591 216h1M846 247h1M910 228h1M813 214h1M821 231h1M644 196h1M831 227h1M717 202h1M849 215h1M664 213h1M553 209h1M812 259h1M806 255h1M561 252h1M661 188h1M917 235h1M903 230h1M623 215h1M700 250h1M689 239h1M658 244h1M918 246h1M724 231h1M907 230h1M600 228h1M875 231h1M562 227h1M823 214h1M585 237h1M722 211h1M547 233h1M870 242h1M812 206h1M785 226h1M917 203h1M571 208h1M829 208h1M885 215h1M672 204h1M696 214h1M887 205h1M726 221h1M921 200h1M533 209h1M666 227h1M566 221h1M881 238h1M763 209h1M689 204h1M566 230h1M715 225h1M889 235h1M596 227h1M912 227h1M748 222h1M532 217h1M676 219h1M897 238h1M856 248h1M853 233h1M847 249h1M775 232h1M548 226h1M751 205h1M857 193h1M634 218h1M652 210h1M739 212h1M596 247h1M662 234h1M664 209h1M575 234h1M884 248h1M799 188h1M878 219h1M848 217h1M714 216h1M778 225h1M690 190h1M570 229h1M549 245h1M707 233h1M749 217h1M710 238h1M928 212h1M648 238h1M720 210h1M898 235h1M745 212h1M742 221h1M734 238h1M592 242h1M730 245h1M773 239h1M925 245h1M682 203h1M821 231h1M922 256h1M821 247h1M922 234h1M799 210h1M537 206h1M816 252h1M626 227h1M908 209h1M918 212h1M674 222h1M530 242h1M906 236h1M834 220h1M541 197h1M613 239h1M870 217h1M850 249h1M627 235h1M568 242h1M690 257h1M605 220h1M884 238h1M919 227h1M622 216h1M880 221h1M882 232h1M551 237h1M804 226h1M730 235h1M585 214h1M713 188h1M574 229h1M678 197h1M740 216h1M764 222h1M715 206h1M648 232h1M827 227h1M847 225h1M571 217h1M761 210h1M754 224h1M782 242h1M538 208h1M556 215h1M584 204h1M628 241h1M847 239h1M569 231h1M756 233h1M864 225h1M752 250h1M784 240h1M778 218h1M928 218h1M926 231h1M920 210h1M819 232h1M762 203h1M576 257h1M842 228h1M530 216h1M722 226h1M626 240h1M860 222h1M895 197h1M677 219h1M767 224h1M876 215h1M640 209h1M835 196h1M909 230h1M733 247h1M705 223h1M726 221h1M546 207h1M926 192h1M866 220h1M562 241h1M690 214h1M802 220h1M802 248h1M596 228h1M564 241h1M533 223h1M571 205h1M563 253h1M815 200h1M776 244h1M829 244h1M643 199h1M593 203h1M590 218h1M783 222h1M929 200h1M919 247h1M639 191h1M696 250h1M529 233h1M844 207h1M703 222h1M842 206h1M876 221h1M704 209h1M701 212h1M539 227h1M729 213h1M752 197h1M782 237h1M832 212h1M860 247h1M689 231h1M894 209h1M641 192h1M748 230h1M629 219h1M736 200h1M641 211h1M573 235h1M749 210h1M889 231h1M723 227h1M622 254h1M795 213h1M910 199h1M829 230h1M819 195h1M536 236h1M817 253h1M683 230h1M572 214h1M898 215h1M770 204h1M816 252h1M918 211h1M655 216h1M742 233h1M855 229h1M773 215h1M662 200h1M820 245h1M876 218h1M742 204h1M642 241h1M899 238h1M779 245h1M858 229h1M724 230h1M650 225h1M721 204h1M860 215h1M580 257h1M643 232h1M755 229h1M899 214h1M813 205h1M614 251h1M718 236h1M813 226h1M900 261h1M588 251h1M805 206h1M726 198h1M588 227h1M542 234h1M686 212h1M641 237h1M563 253h1M567 223h1M766 233h1M873 217h1M573 250h1M836 206h1M685 243h1M590 241h1M589 194h1M711 232h1M551 231h1M634 224h1M858 220h1M905 244h1M800 191h1M768 220h1M790 228h1M864 195h1M756 236h1M718 208h1M769 213h1M625 211h1M597 213h1M910 219h1M799 215h1M729 236h1M557 227h1M715 228h1M657 239h1M672 201h1M782 222h1M626 194h1M731 198h1M668 228h1M814 255h1M585 238h1M636 252h1M714 212h1M620 261h1M665 223h1M559 229h1M804 205h1M629 234h1M727 243h1M644 256h1M918 247h1M601 227h1M895 234h1M737 220h1M644 208h1M915 215h1M683 216h1M532 222h1M891 215h1M745 240h1M613 209h1M768 241h1M859 237h1M537 245h1M613 194h1M765 263h1M854 246h1M589 222h1M586 206h1M683 226h1M768 213h1M561 222h1M780 231h1M602 218h1M715 218h1M776 206h1M542 243h1M750 261h1M699 238h1M858 236h1M638 200h1M597 223h1M589 202h1M594 249h1M905 235h1M751 261h1M851 222h1M656 204h1M774 240h1M774 193h1M636 254h1M840 260h1M807 250h1M620 227h1M644 209h1M820 219h1M763 236h1M834 206h1M811 241h1M803 220h1M684 250h1M554 255h1M710 218h1M655 242h1M697 194h1M903 221h1M868 226h1M694 196h1M922 237h1M558 204h1M552 230h1M792 248h1M667 258h1M766 219h1M632 246h1M576 204h1M592 232h1M651 248h1M745 215h1M773 239h1M608 203h1M641 206h1M648 203h1M843 231h1M766 226h1M695 251h1M753 257h1M685 189h1M861 257h1M797 246h1M848 222h1M878 221h1M698 261h1M611 221h1M635 198h1M725 226h1M846 229h1M592 242h1M601 226h1M753 228h1M687 242h1M855 229h1M816 207h1M604 246h1M747 202h1M714 217h1M576 247h1M528 210h1M794 248h1M796 201h1M881 219h1M820 239h1M674 214h1M759 219h1M564 217h1M681 207h1M619 241h1M879 221h1M635 239h1M570 209h1M769 233h1M780 234h1M655 235h1M691 222h1M642 216h1M852 241h1M839 253h1M701 252h1M861 224h1M638 240h1M634 240h1M568 260h1M763 211h1M543 222h1M899 218h1M911 203h1M829 221h1M676 223h1M879 228h1M590 232h1M885 224h1M746 203h1M571 228h1M830 228h1M929 214h1M886 203h1M661 224h1M792 218h1M838 199h1M740 212h1M537 199h1M902 258h1M690 240h1M533 254h1M715 215h1M838 199h1M529 251h1M537 238h1M602 240h1M622 230h1M866 231h1M629 208h1M779 202h1M690 250h1M881 230h1M765 243h1M738 227h1M796 203h1M892 215h1M712 235h1M758 212h1M572 225h1M773 208h1M920 231h1M603 207h1M739 238h1M610 224h1M576 209h1M643 219h1M873 256h1M665 196h1M638 226h1M717 233h1M866 204h1M905 244h1M739 215h1M608 207h1M784 261h1M778 242h1M706 214h1M915 245h1M920 223h1M743 223h1M566 254h1M575 228h1M870 261h1M657 235h1M794 256h1M706 240h1M754 215h1M898 193h1M737 217h1M621 209h1M593 206h1M671 196h1M778 225h1M541 232h1M885 247h1M645 223h1M782 224h1M891 212h1M731 234h1M535 211h1M654 239h1M711 260h1M787 189h1M705 212h1M844 229h1M772 192h1M837 258h1M641 258h1M715 236h1M549 207h1M896 253h1M907 241h1M636 218h1M647 246h1M639 219h1M635 232h1M581 217h1M883 211h1M663 216h1M930 201h1M807 253h1M823 238h1M650 230h1M629 195h1M840 232h1M882 222h1M548 210h1M848 230h1M706 226h1M817 213h1M686 217h1M926 226h1M658 246h1M894 211h1M590 242h1M663 213h1M916 196h1M866 237h1M831 242h1M885 192h1M842 208h1M717 226h1M623 226h1M732 220h1M776 196h1M708 216h1M809 247h1M599 214h1M910 196h1M777 242h1M638 231h1M669 205h1M840 214h1M545 256h1M664 239h1M725 229h1M665 232h1M790 239h1M802 226h1M863 233h1M571 257h1M896 213h1M719 203h1M905 241h1M604 219h1M721 242h1M745 213h1M861 212h1M866 254h1M710 202h1M809 251h1M904 235h1M643 221h1M709 216h1M748 219h1M836 210h1M633 223h1M735 225h1M616 231h1M847 207h1M712 262h1M615 206h1M637 194h1M784 192h1M857 245h1M888 213h1M542 211h1M653 228h1M642 241h1M559 214h1M629 237h1M567 243h1M623 226h1M661 203h1M554 218h1M620 255h1M770 246h1M590 223h1M774 262h1M929 203h1M571 251h1M729 232h1M686 240h1M623 217h1M778 214h1M653 215h1M621 204h1M556 216h1M715 258h1M777 204h1M815 249h1M874 193h1M754 193h1M925 240h1M620 244h1M601 223h1M653 229h1M691 219h1M841 202h1M845 226h1M815 220h1M767 219h1M768 192h1M912 204h1M886 253h1M700 215h1M770 225h1M828 235h1M897 225h1M821 225h1M570 232h1M829 202h1M780 206h1M599 235h1M897 196h1M769 243h1M807 193h1M663 245h1M884 220h1M635 210h1M790 211h1M919 217h1M910 239h1M682 237h1M659 223h1M683 228h1M903 201h1M738 255h1M602 239h1M813 222h1M704 236h1M883 216h1M563 216h1M548 230h1M924 233h1M565 208h1M547 222h1M772 222h1M611 221h1M915 234h1M547 228h1M832 233h1M783 193h1M538 244h1M652 243h1M759 233h1M536 224h1M562 225h1M658 242h1M607 218h1M835 242h1M534 220h1M694 203h1M575 218h1M872 214h1M866 215h1M568 204h1M793 245h1M738 197h1M625 237h1M884 221h1M897 221h1M915 226h1M778 251h1M710 196h1M875 221h1M573 225h1M769 248h1M561 211h1M581 231h1M529 231h1M667 231h1M816 218h1M923 229h1M566 221h1M664 240h1M916 258h1M769 252h1M557 263h1M738 231h1M864 220h1M569 195h1M620 229h1M775 210h1M681 226h1M730 245h1M719 231h1M621 219h1M740 214h1M920 223h1M713 209h1M737 246h1M759 213h1M647 229h1M738 240h1M913 240h1M815 241h1M891 216h1M916 225h1M681 252h1M786 253h1M667 201h1M830 224h1M893 213h1M772 189h1M866 242h1M830 202h1M820 241h1M589 228h1M854 223h1M870 232h1M917 215h1M779 248h1M905 209h1M740 243h1M639 224h1M853 201h1M869 242h1M563 192h1M663 202h1M560 210h1M686 195h1M627 204h1M725 223h1M634 215h1M693 233h1M542 223h1M857 248h1M674 202h1M652 230h1M556 233h1M648 223h1M603 238h1M853 237h1M611 218h1M626 228h1M735 213h1M845 200h1M808 240h1M691 212h1M796 243h1M624 202h1M609 206h1M795 234h1M721 254h1M624 227h1M658 234h1M749 215h1M786 212h1M871 229h1M931 244h1M771 231h1M608 213h1M637 192h1M793 230h1M558 233h1M714 233h1M575 189h1M747 203h1M653 213h1M626 218h1M810 212h1M775 211h1M561 215h1M705 194h1M630 223h1M801 233h1M695 198h1M780 243h1M749 231h1M850 193h1M813 226h1M678 196h1M873 245h1M782 239h1M766 254h1M835 200h1M607 250h1M597 235h1M632 259h1M912 260h1M803 226h1M671 209h1M841 222h1M549 224h1M568 222h1M798 204h1M549 255h1M677 233h1M855 193h1M866 220h1M903 238h1M732 246h1M866 193h1M720 221h1M578 211h1M647 260h1M917 215h1M532 256h1M813 202h1M833 240h1M780 232h1M765 263h1M532 250h1M840 239h1M570 231h1M930 221h1M615 200h1M604 208h1M787 250h1M655 212h1M732 198h1M884 207h1M907 252h1M560 232h1M740 222h1M808 246h1M669 215h1M881 212h1" stroke="#acd23a" stroke-width="1" fill="none"/>
<text x="106" y="166" font-size="8.2" fill="#ffffff" text-anchor="start" font-weight="normal" stroke="#ffffff" stroke-width="0.25">Filtered (200KHz LP) SSC Profile</text><path d="M106 168H228M170 168L237 179" stroke="#e0e0e0" stroke-width="1.1" fill="none"/>
<text x="106" y="336" font-size="8.2" fill="#ffffff" text-anchor="start" font-weight="normal" stroke="#ffffff" stroke-width="0.25">Filtered (3.7 MHz LP) SSC Profile</text><path d="M106 338H228M170 338L237 349" stroke="#e0e0e0" stroke-width="1.1" fill="none"/>
<text x="337.5" y="238.8" font-size="8" fill="#ffffff" text-anchor="start" font-weight="normal" stroke="#ffffff" stroke-width="0.25">max</text><path d="M337.5 241.5H353M347 241.5L362 252" stroke="#e0e0e0" stroke-width="1.1" fill="none"/>
<text x="340" y="410.5" font-size="8" fill="#ffffff" text-anchor="start" font-weight="normal" stroke="#ffffff" stroke-width="0.25">min</text><path d="M340 413H355M348 413L362 424" stroke="#e0e0e0" stroke-width="1.1" fill="none"/>
<text x="806.5" y="123.8" font-size="8" fill="#ffffff" text-anchor="start" font-weight="normal" stroke="#ffffff" stroke-width="0.25">max</text><path d="M806.5 127H823M816 127L831.5 138" stroke="#e0e0e0" stroke-width="1.1" fill="none"/>
<text x="809" y="298" font-size="8" fill="#ffffff" text-anchor="start" font-weight="normal" stroke="#ffffff" stroke-width="0.25">min</text><path d="M809 301H824M818 301L831.5 312" stroke="#e0e0e0" stroke-width="1.1" fill="none"/>
<text x="560" y="221" font-size="8.1" fill="#ffffff" text-anchor="start" font-weight="normal" stroke="#ffffff" stroke-width="0.25">Rate of Frequency Modulation (dF/dT)</text><path d="M560 223H698M630 223L708 235" stroke="#e0e0e0" stroke-width="1.1" fill="none"/>
<text x="3.8" y="110.4" font-size="7.2" fill="#e0306a" text-anchor="start" font-weight="normal" stroke="#e0306a" stroke-width="0.2">F2</text><path d="M5 113.6H12.5" stroke="#e85088" stroke-width="1.8"/>
<text x="3.8" y="336.0" font-size="7.2" fill="#18b4ea" text-anchor="start" font-weight="normal" stroke="#18b4ea" stroke-width="0.2">F3</text><path d="M5 338.8H12.5" stroke="#22ccf4" stroke-width="1.8"/>
<text x="474.2" y="223.8" font-size="7.2" fill="#98c822" text-anchor="start" font-weight="normal" stroke="#98c822" stroke-width="0.2">F4</text><path d="M475 227H482.5" stroke="#b4dc30" stroke-width="1.8"/>
<path d="M237.2 220.3L240.2 226.2H234.2Z" fill="#f0528e"/>
<path d="M237.2 447.5L240.2 453.2H234.2Z" fill="#18c2f2"/>
<path d="M707.5 447.5L710.5 453.2H704.5Z" fill="#b4dc30"/>
<text x="3.7" y="463.3" font-size="9" fill="#f4f4f4" text-anchor="start" font-weight="bold">Measure</text>
<text x="3.7" y="474.8" font-size="9" fill="#f4f4f4" text-anchor="start" font-weight="normal" stroke="#f4f4f4" stroke-width="0.15">value</text>
<text x="3.7" y="487.0" font-size="9" fill="#f4f4f4" text-anchor="start" font-weight="normal" stroke="#f4f4f4" stroke-width="0.15">status</text>
<text x="131.3" y="463.3" font-size="9" fill="#f4f4f4" text-anchor="end" font-weight="normal" stroke="#f4f4f4" stroke-width="0.15">Max Freq</text>
<text x="131.3" y="474.8" font-size="9" fill="#f4f4f4" text-anchor="end" font-weight="normal" stroke="#f4f4f4" stroke-width="0.15">-622.7 ppm</text>
<path d="M122.5 483.4L124.9 485.9L129.7 480.6" stroke="#22e022" stroke-width="1.9" fill="none"/>
<text x="195.9" y="463.3" font-size="9" fill="#f4f4f4" text-anchor="end" font-weight="normal" stroke="#f4f4f4" stroke-width="0.15">Min Freq</text>
<text x="195.9" y="474.8" font-size="9" fill="#f4f4f4" text-anchor="end" font-weight="normal" stroke="#f4f4f4" stroke-width="0.15">636.6 ppm</text>
<path d="M187.1 483.4L189.5 485.9L194.3 480.6" stroke="#22e022" stroke-width="1.9" fill="none"/>
<text x="260.5" y="463.3" font-size="9" fill="#f4f4f4" text-anchor="end" font-weight="normal" stroke="#f4f4f4" stroke-width="0.15">Variation P-P</text>
<text x="260.5" y="474.8" font-size="9" fill="#f4f4f4" text-anchor="end" font-weight="normal" stroke="#f4f4f4" stroke-width="0.15">1.2593 kppm</text>
<path d="M251.7 483.4L254.1 485.9L258.9 480.6" stroke="#22e022" stroke-width="1.9" fill="none"/>
<text x="325.1" y="463.3" font-size="9" fill="#5e5e5e" text-anchor="end" font-weight="normal" stroke="#5e5e5e" stroke-width="0.1">P4:min(F2)</text>
<text x="389.7" y="463.3" font-size="9" fill="#5e5e5e" text-anchor="end" font-weight="normal" stroke="#5e5e5e" stroke-width="0.1">P5:max(F2)</text>
<text x="454.3" y="463.3" font-size="9" fill="#5e5e5e" text-anchor="end" font-weight="normal" stroke="#5e5e5e" stroke-width="0.1">P6:- - -</text>
<text x="518.9" y="463.3" font-size="9" fill="#f4f4f4" text-anchor="end" font-weight="normal" stroke="#f4f4f4" stroke-width="0.15">Mod Freq</text>
<text x="518.9" y="474.8" font-size="9" fill="#f4f4f4" text-anchor="end" font-weight="normal" stroke="#f4f4f4" stroke-width="0.15">31.0597 kHz</text>
<path d="M510.1 483.4L512.5 485.9L517.3 480.6" stroke="#22e022" stroke-width="1.9" fill="none"/>
<text x="583.5" y="463.3" font-size="9" fill="#5e5e5e" text-anchor="end" font-weight="normal" stroke="#5e5e5e" stroke-width="0.1">P8:- - -</text>
<text x="648.0999999999999" y="463.3" font-size="9" fill="#f4f4f4" text-anchor="end" font-weight="normal" stroke="#f4f4f4" stroke-width="0.15">MinDFDT</text>
<text x="648.0999999999999" y="474.8" font-size="9" fill="#f4f4f4" text-anchor="end" font-weight="normal" stroke="#f4f4f4" stroke-width="0.15">-757 Mppm/s</text>
<path d="M639.3 483.4L641.7 485.9L646.5 480.6" stroke="#22e022" stroke-width="1.9" fill="none"/>
<text x="712.7" y="463.3" font-size="9" fill="#f4f4f4" text-anchor="end" font-weight="normal" stroke="#f4f4f4" stroke-width="0.15">MaxDFDT</text>
<text x="712.7" y="474.8" font-size="9" fill="#f4f4f4" text-anchor="end" font-weight="normal" stroke="#f4f4f4" stroke-width="0.15">806 Mppm/s</text>
<path d="M703.9 483.4L706.3 485.9L711.1 480.6" stroke="#22e022" stroke-width="1.9" fill="none"/>
<text x="777.3" y="463.3" font-size="9" fill="#5e5e5e" text-anchor="end" font-weight="normal" stroke="#5e5e5e" stroke-width="0.1">P11:- - -</text>
<text x="841.8999999999999" y="463.3" font-size="9" fill="#f4f4f4" text-anchor="end" font-weight="normal" stroke="#f4f4f4" stroke-width="0.15">Imbalance</text>
<text x="841.8999999999999" y="474.8" font-size="9" fill="#f4f4f4" text-anchor="end" font-weight="normal" stroke="#f4f4f4" stroke-width="0.15">14.089 ppm</text>
<path d="M833.1 483.4L835.5 485.9L840.3 480.6" stroke="#22e022" stroke-width="1.9" fill="none"/>
<defs>
<linearGradient id="gTop" x1="0" y1="0" x2="0" y2="1"><stop offset="0" stop-color="#7c8092"/><stop offset="1" stop-color="#5e6272"/></linearGradient>
<linearGradient id="gBot" x1="0" y1="0" x2="0" y2="1"><stop offset="0" stop-color="#4a4c58"/><stop offset="1" stop-color="#5a5c68"/></linearGradient>
<linearGradient id="gF4" x1="0" y1="0" x2="0" y2="1"><stop offset="0" stop-color="#60647a"/><stop offset="0.5" stop-color="#50546a"/><stop offset="1" stop-color="#7a9e1a"/></linearGradient>
</defs>
<rect x="3.5" y="490.8" width="70.6" height="32.6" rx="3" fill="url(#gBot)" stroke="#7c7c84" stroke-width="1"/><path d="M4.0 508V494Q4.0 491.3 6.5 491.3H71.1Q73.6 491.3 73.6 494V508Z" fill="url(#gTop)"/><rect x="4.8" y="491.8" width="12.6" height="9.8" rx="2" fill="#e8587e"/><text x="5.9" y="499.9" font-size="9" fill="#24102a" text-anchor="start" font-weight="normal" stroke="#24102a" stroke-width="0.2">F2</text><svg x="3.5" y="490" width="70.3" height="34" overflow="hidden"><text x="71.19999999999999" y="9.2" font-size="9" fill="#1c1c28" text-anchor="end" font-weight="normal" stroke="#1c1c28" stroke-width="0.2">web edit</text><text x="71.19999999999999" y="20.6" font-size="9" fill="#f4f4f4" text-anchor="end" font-weight="normal" stroke="#f4f4f4" stroke-width="0.15">200 ppm/div</text><text x="71.19999999999999" y="30.9" font-size="9" fill="#f4f4f4" text-anchor="end" font-weight="normal" stroke="#f4f4f4" stroke-width="0.15">50.0 µs/div</text></svg>
<rect x="76.8" y="490.8" width="70.6" height="32.6" rx="3" fill="url(#gBot)" stroke="#7c7c84" stroke-width="1"/><path d="M77.3 508V494Q77.3 491.3 79.8 491.3H144.39999999999998Q146.89999999999998 491.3 146.89999999999998 494V508Z" fill="url(#gTop)"/><rect x="78.1" y="491.8" width="12.6" height="9.8" rx="2" fill="#18c4f4"/><text x="79.2" y="499.9" font-size="9" fill="#24102a" text-anchor="start" font-weight="normal" stroke="#24102a" stroke-width="0.2">F3</text><svg x="76.8" y="490" width="70.3" height="34" overflow="hidden"><text x="71.19999999999999" y="9.2" font-size="9" fill="#1c1c28" text-anchor="end" font-weight="normal" stroke="#1c1c28" stroke-width="0.2">web edit</text><text x="71.19999999999999" y="20.6" font-size="9" fill="#f4f4f4" text-anchor="end" font-weight="normal" stroke="#f4f4f4" stroke-width="0.15">200 ppm/div</text><text x="71.19999999999999" y="30.9" font-size="9" fill="#f4f4f4" text-anchor="end" font-weight="normal" stroke="#f4f4f4" stroke-width="0.15">50.0 µs/div</text></svg>
<rect x="150.2" y="490.8" width="70.6" height="32.6" rx="3" fill="url(#gF4)" stroke="#a8cc2c" stroke-width="1.3"/><rect x="151.5" y="491.8" width="12.6" height="9.8" rx="2" fill="#b8e420"/><text x="152.6" y="499.9" font-size="9" fill="#24102a" text-anchor="start" font-weight="normal" stroke="#24102a" stroke-width="0.2">F4</text><svg x="150.2" y="490" width="70.3" height="34" overflow="hidden"><text x="71.19999999999999" y="9.2" font-size="9" fill="#1c1c28" text-anchor="end" font-weight="normal" stroke="#1c1c28" stroke-width="0.2">web edit</text><text x="71.19999999999999" y="20.6" font-size="9" fill="#f4f4f4" text-anchor="end" font-weight="normal" stroke="#f4f4f4" stroke-width="0.15">500 Mppm/s</text><text x="71.19999999999999" y="30.9" font-size="9" fill="#f4f4f4" text-anchor="end" font-weight="normal" stroke="#f4f4f4" stroke-width="0.15">50.0 µs/div</text></svg>
<rect x="781.5" y="491" width="81" height="32.4" rx="3" fill="#4c4e5a" stroke="#7c7c84" stroke-width="1"/><rect x="782.0" y="501.3" width="80" height="7" fill="#5c5f6e"/><rect x="782.5" y="491.9" width="79" height="9.4" rx="2" fill="#fafafa"/><text x="783.3" y="499.4" font-size="9" fill="#2a1a2e" text-anchor="start" font-weight="normal" stroke="#2a1a2e" stroke-width="0.15">Timebase</text><text x="861.3" y="499.4" font-size="9" fill="#2a1a2e" text-anchor="end" font-weight="normal" stroke="#2a1a2e" stroke-width="0.15">0 ns</text><text x="861.8" y="510.9" font-size="9" fill="#f4f4f4" text-anchor="end" font-weight="normal" stroke="#f4f4f4" stroke-width="0.15">50.0 ns/div</text><text x="782.8" y="520.9" font-size="9" fill="#f4f4f4" text-anchor="start" font-weight="normal" stroke="#f4f4f4" stroke-width="0.15">20.0 kS</text><text x="861.8" y="520.9" font-size="9" fill="#f4f4f4" text-anchor="end" font-weight="normal" stroke="#f4f4f4" stroke-width="0.15">40 GS/s</text>
<rect x="866" y="491" width="70" height="32.4" rx="3" fill="#4c4e5a" stroke="#7c7c84" stroke-width="1"/><rect x="866.5" y="501.3" width="69" height="7" fill="#5c5f6e"/><rect x="867" y="491.9" width="68" height="9.4" rx="2" fill="#fafafa"/><text x="867.8" y="499.4" font-size="9" fill="#2a1a2e" text-anchor="start" font-weight="normal" stroke="#2a1a2e" stroke-width="0.15">Trigger</text><rect x="907" y="492.9" width="11.8" height="7.6" rx="2.5" fill="#0a0a0a"/><rect x="920.1" y="492.9" width="13.6" height="7.6" rx="2.5" fill="#0a0a0a"/><text x="912.9" y="499.7" font-size="8.4" fill="#f4f4f4" text-anchor="middle" font-weight="normal" stroke="#f4f4f4" stroke-width="0.1">C1</text><text x="926.9" y="499.7" font-size="8.4" fill="#f4f4f4" text-anchor="middle" font-weight="normal" stroke="#f4f4f4" stroke-width="0.1">DC</text><text x="867.7" y="510.8" font-size="9" fill="#f4f4f4" text-anchor="start" font-weight="normal" stroke="#f4f4f4" stroke-width="0.15">Stop</text><text x="935" y="510.8" font-size="9" fill="#f4f4f4" text-anchor="end" font-weight="normal" stroke="#f4f4f4" stroke-width="0.15">0.0 mV</text><text x="867.7" y="520.8" font-size="9" fill="#f4f4f4" text-anchor="start" font-weight="normal" stroke="#f4f4f4" stroke-width="0.15">Edge</text><text x="935" y="520.8" font-size="9" fill="#f4f4f4" text-anchor="end" font-weight="normal" stroke="#f4f4f4" stroke-width="0.15">Positive</text>
</svg></body></html>
